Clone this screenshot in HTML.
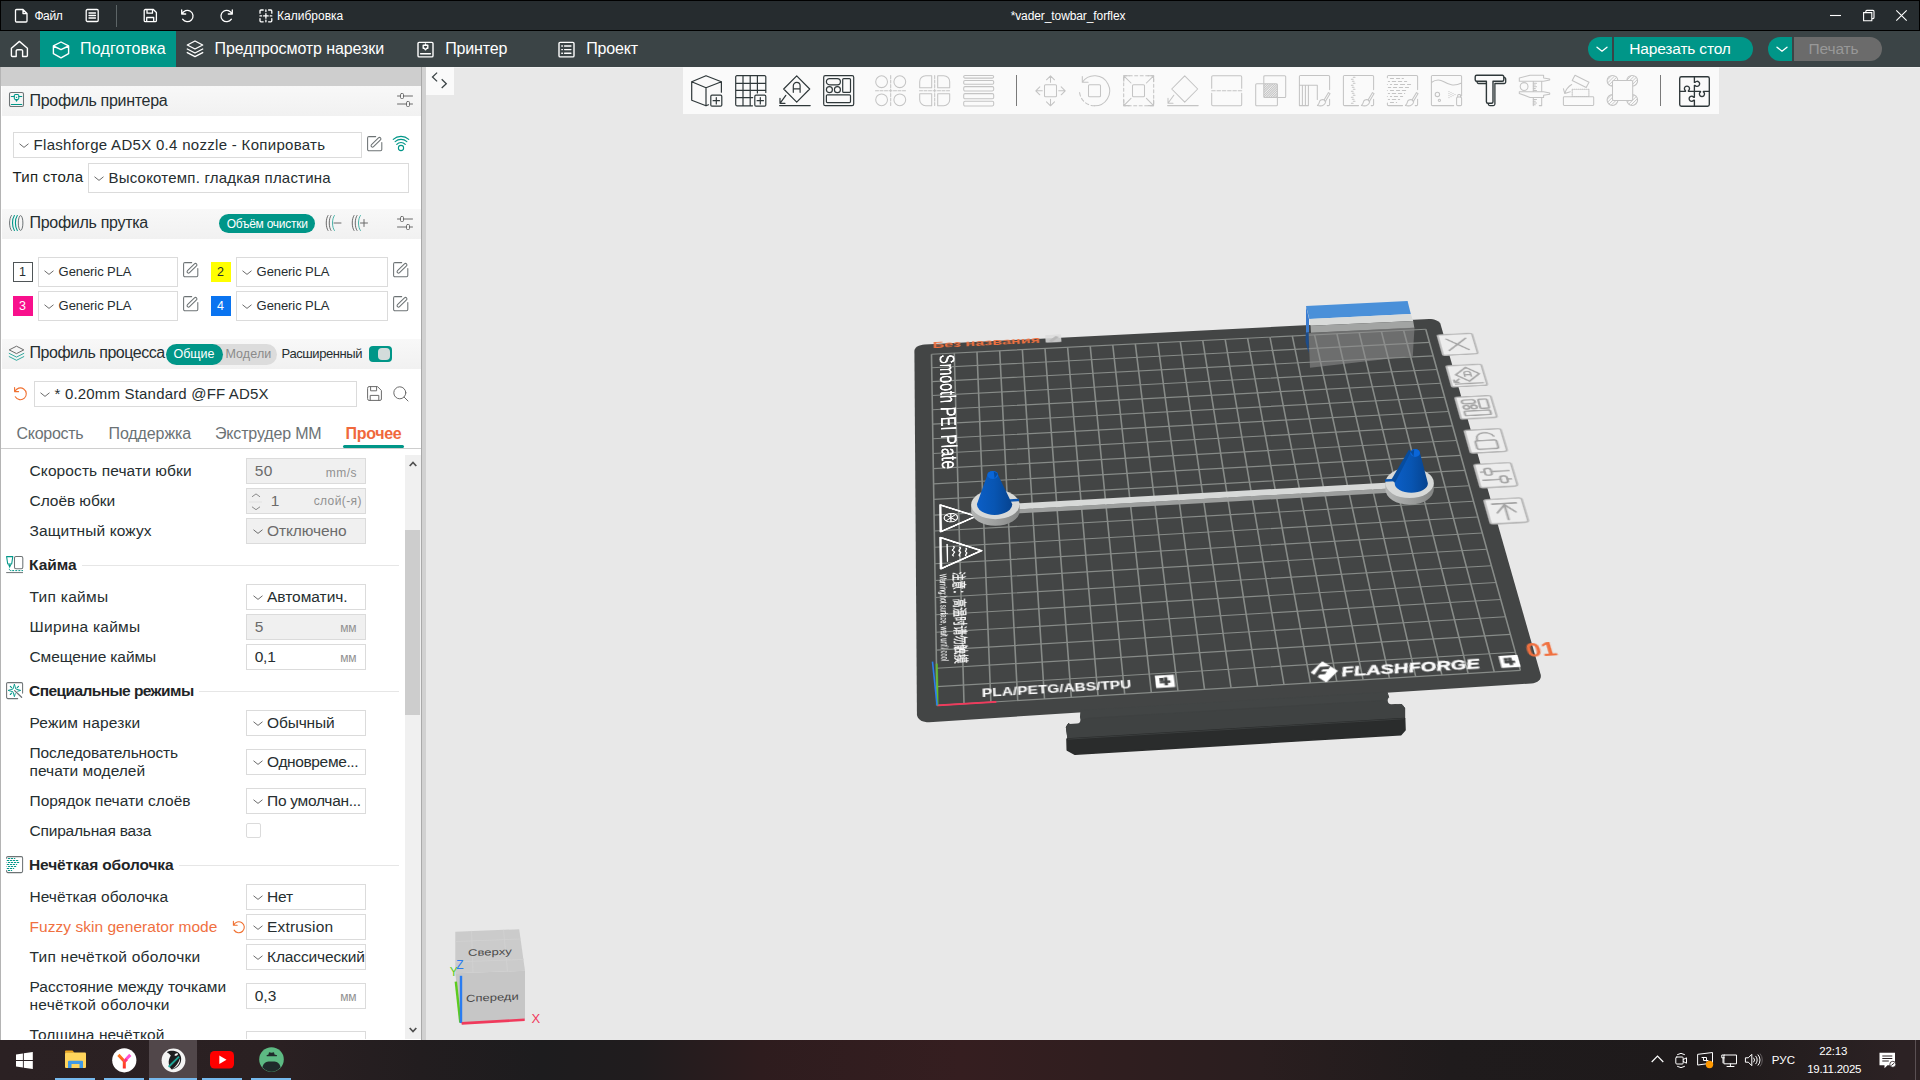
<!DOCTYPE html>
<html lang="ru"><head><meta charset="utf-8"><title>OrcaSlicer</title>
<style>
*{box-sizing:border-box;margin:0;padding:0}
html,body{width:1920px;height:1080px;overflow:hidden;background:#e8e8e8}
body{position:relative;font-family:"Liberation Sans",sans-serif;color:#262e30}
.t{position:absolute;white-space:nowrap;line-height:1;display:block}
.abs{position:absolute}
svg{overflow:visible}

</style></head>
<body>
<!-- top -->
<div class="" style="position:absolute;left:0px;top:0px;width:1920px;height:31px;background:#000"></div>
<div class="" style="position:absolute;left:1px;top:1px;width:1918px;height:29px;background:#262c2f"></div>
<svg style="position:absolute;left:14px;top:8px;" width="15" height="15" viewBox="0 0 15 15" fill="none"><path d="M1.5 2.5a1 1 0 0 1 1-1h6.5l4 4v7.5a1 1 0 0 1-1 1h-9.5a1 1 0 0 1-1-1z M9 1.5v4h4" stroke="#fff" stroke-width="1.3" stroke-linecap="round" stroke-linejoin="round"/></svg>
<span id="t1" class="t" style="left:34.39px;top:10px;font-size:12px;color:#fff;letter-spacing:-0.392px;">Файл</span>
<svg style="position:absolute;left:85px;top:8px;" width="15" height="15" viewBox="0 0 15 15" fill="none"><rect x="1.2" y="1.5" width="12" height="12" rx="1.2" stroke="#fff" stroke-width="1.3" stroke-linecap="round" stroke-linejoin="round"/><path d="M4 5h6.5M4 7.5h6.5M4 10h6.5" stroke="#fff" stroke-width="1.3" stroke-linecap="round" stroke-linejoin="round"/></svg>
<div class="" style="position:absolute;left:116px;top:4.5px;width:1px;height:22px;background:#5d6567"></div>
<svg style="position:absolute;left:143px;top:8px;" width="15" height="15" viewBox="0 0 15 15" fill="none"><path d="M1.2 2.7a1.2 1.2 0 0 1 1.2-1.2h8l3 3v8a1.2 1.2 0 0 1-1.2 1.2h-9.8a1.2 1.2 0 0 1-1.2-1.2z M4 1.5v3.7h5.5v-3.7 M3.7 13.7v-4.2h7v4.2" stroke="#fff" stroke-width="1.3" stroke-linecap="round" stroke-linejoin="round"/></svg>
<svg style="position:absolute;left:179.5px;top:7.7px;" width="15" height="15" viewBox="0 0 15 15" fill="none"><path d="M1.7 2v4h4 M2 6a5.7 5.7 0 1 1 0.6 5.2" stroke="#fff" stroke-width="1.3" stroke-linecap="round" stroke-linejoin="round"/></svg>
<svg style="position:absolute;left:218.5px;top:7.7px;" width="15" height="15" viewBox="0 0 15 15" fill="none"><path d="M13.3 2v4h-4 M13 6a5.7 5.7 0 1 0-0.6 5.2" stroke="#fff" stroke-width="1.3" stroke-linecap="round" stroke-linejoin="round"/></svg>
<svg style="position:absolute;left:258.5px;top:8.5px;" width="14" height="14" viewBox="0 0 14 14" fill="none"><path d="M1 4.2v-2.2a1 1 0 0 1 1-1h2.2 M9.6 1h2.2a1 1 0 0 1 1 1v2.2 M12.8 9.6v2.2a1 1 0 0 1-1 1h-2.2 M4.2 12.8h-2.2a1 1 0 0 1-1-1v-2.2 M6.9 4.6v4.6 M4.6 6.9h4.6 M6.9 1v1.6 M6.9 11.2v1.6 M1 6.9h1.6 M11.2 6.9h1.6" stroke="#fff" stroke-width="1.3" stroke-linecap="round" stroke-linejoin="round"/></svg>
<span id="t2" class="t" style="left:276.94px;top:10px;font-size:12px;color:#fff;letter-spacing:0.02px;">Калибровка</span>
<span id="t3" class="t" style="left:1010.64px;top:10px;font-size:12px;color:#fff;letter-spacing:-0.095px;">*vader_towbar_forflex</span>
<svg style="position:absolute;left:1830px;top:9px;" width="80" height="14" viewBox="0 0 80 14" fill="none"><path d="M0 6.5h11" stroke="#fff" stroke-width="1.1"/><path d="M33.6 3.6h8.2v8.2h-8.2z M35.8 3.4v-1a1 1 0 0 1 1-1h6.2a1 1 0 0 1 1 1v6.2a1 1 0 0 1-1 1h-1" stroke="#fff" stroke-width="1.1"/><path d="M66.3 1.3l10.4 10.4 M76.7 1.3l-10.4 10.4" stroke="#fff" stroke-width="1.1"/></svg>
<div class="" style="position:absolute;left:0px;top:31px;width:1920px;height:36px;background:#3b4446"></div>
<div class="" style="position:absolute;left:40px;top:31px;width:136px;height:36px;background:#009688"></div>
<svg style="position:absolute;left:10px;top:40px;" width="19" height="18" viewBox="0 0 19 18" fill="none"><path d="M1.4 8.2l8-6.8 8 6.8v7.3a1 1 0 0 1-1 1h-3.8v-5.4a1.4 1.4 0 0 0-1.4-1.4h-3.6a1.4 1.4 0 0 0-1.4 1.4v5.4h-3.8a1 1 0 0 1-1-1z" stroke="#fff" stroke-width="1.4" stroke-linecap="round" stroke-linejoin="round"/></svg>
<svg style="position:absolute;left:51.5px;top:40.5px;" width="18" height="18" viewBox="0 0 18 18" fill="none"><path d="M9 1l7.6 3.9v7.8l-7.6 4.2-7.6-4.2v-7.8z M1.5 5l7.5 3.6 7.5-3.6" stroke="#fff" stroke-width="1.4" stroke-linecap="round" stroke-linejoin="round"/></svg>
<span id="t4" class="t" style="left:80.12px;top:41px;font-size:16px;color:#fff;letter-spacing:0.145px;">Подготовка</span>
<svg style="position:absolute;left:185.8px;top:40.3px;" width="18" height="18" viewBox="0 0 18 18" fill="none"><path d="M9 1l7.7 4-7.7 4-7.7-4z M1.3 9l7.7 4 7.7-4 M1.3 12.6l7.7 4 7.7-4" stroke="#fff" stroke-width="1.4" stroke-linecap="round" stroke-linejoin="round"/></svg>
<span id="t5" class="t" style="left:214.52px;top:41px;font-size:16px;color:#fff;letter-spacing:-0.095px;">Предпросмотр нарезки</span>
<svg style="position:absolute;left:416.5px;top:40.5px;" width="17" height="17" viewBox="0 0 17 17" fill="none"><rect x="1" y="1.4" width="15" height="14.5" rx="1.2" stroke="#fff" stroke-width="1.4" stroke-linecap="round" stroke-linejoin="round"/><path d="M3.6 12.7h9.8 M6.2 4.3h4.6v3h-1.2l-1.1 1.5-1.1-1.5h-1.2z M8.5 4.3v-1.4" stroke="#fff" stroke-width="1.4" stroke-linecap="round" stroke-linejoin="round"/></svg>
<span id="t6" class="t" style="left:445.22px;top:41px;font-size:16px;color:#fff;letter-spacing:-0.168px;">Принтер</span>
<svg style="position:absolute;left:558px;top:40.5px;" width="17" height="17" viewBox="0 0 17 17" fill="none"><rect x="1" y="1.4" width="15" height="14.5" rx="1.2" stroke="#fff" stroke-width="1.4" stroke-linecap="round" stroke-linejoin="round"/><path d="M6.6 5h6.3 M6.6 8.6h6.3 M6.6 12.2h6.3 M3.8 5h.6 M3.8 8.6h.6 M3.8 12.2h.6" stroke="#fff" stroke-width="1.4" stroke-linecap="round" stroke-linejoin="round"/></svg>
<span id="t7" class="t" style="left:586.22px;top:41px;font-size:16px;color:#fff;letter-spacing:-0.157px;">Проект</span>
<div class="" style="position:absolute;left:1588px;top:37px;width:24px;height:24px;background:#009688;border-radius:12px 0 0 12px"></div>
<div class="" style="position:absolute;left:1614px;top:37px;width:139px;height:24px;background:#009688;border-radius:0 12px 12px 0"></div>
<svg style="position:absolute;left:1596px;top:46px;" width="12" height="7" viewBox="0 0 12 7" fill="none"><path d="M1 1.2l5 4 5-4" stroke="#fff" stroke-width="1.3" stroke-linecap="round" stroke-linejoin="round"/></svg>
<span id="t8" class="t" style="left:1629.29px;top:41px;font-size:15.5px;color:#fff;letter-spacing:-0.167px;">Нарезать стол</span>
<div class="" style="position:absolute;left:1768px;top:37px;width:24px;height:24px;background:#009688;border-radius:12px 0 0 12px"></div>
<div class="" style="position:absolute;left:1794px;top:37px;width:88px;height:24px;background:#6b6b6b;border-radius:0 12px 12px 0"></div>
<svg style="position:absolute;left:1776px;top:46px;" width="12" height="7" viewBox="0 0 12 7" fill="none"><path d="M1 1.2l5 4 5-4" stroke="#fff" stroke-width="1.3" stroke-linecap="round" stroke-linejoin="round"/></svg>
<span id="t9" class="t" style="left:1808.54px;top:41px;font-size:15.5px;color:#989898;letter-spacing:-0.139px;">Печать</span>
<!-- sidebar -->
<div class="" style="position:absolute;left:0px;top:67px;width:421px;height:973px;background:#fff"></div>
<div class="" style="position:absolute;left:0px;top:67px;width:1px;height:973px;background:#b4b4b4"></div>
<div class="" style="position:absolute;left:1px;top:67px;width:420px;height:19px;background:#cecece"></div>
<div class="" style="position:absolute;left:421px;top:67px;width:1px;height:973px;background:#a9a9a9"></div>
<div class="" style="position:absolute;left:422px;top:67px;width:4px;height:973px;background:#d1d1d1"></div>
<div class="" style="position:absolute;left:2px;top:86px;width:419px;height:30px;background:linear-gradient(#f8f8f8,#f1f1f1)"></div><span id="t10" class="t" style="left:29.52px;top:93px;font-size:16px;color:#262e30;letter-spacing:-0.306px;">Профиль принтера</span>
<svg style="position:absolute;left:9px;top:92px;" width="16" height="16" viewBox="0 0 16 16" fill="none"><rect x=".5" y=".5" width="14" height="14" rx="1.600" stroke="#6d7375" stroke-width="1.050"/><path d="M2.300 4.400h3 M9.800 4.400h3 M2.300 12.400h10.500" stroke="#009688" stroke-width="1.050" stroke-linecap="round"/><rect x="5.300" y="2.400" width="4.500" height="5" rx="1.200" stroke="#009688" stroke-width="1.050"/><circle cx="7.550" cy="5.300" r=".65" fill="#009688"/><path d="M5.900 7.600h3.300l-1.650 2.500z" fill="#009688"/></svg>
<svg style="position:absolute;left:397px;top:92px;" width="16" height="16" viewBox="0 0 16 16" fill="none"><path d="M0.5 4h3 M6.5 4h9 M0.5 12h9 M12.5 12h3" stroke="#6b6b6b" stroke-width="1" stroke-linecap="round" stroke-linejoin="round"/><rect x="3.5" y="1.5" width="3" height="5" rx="1" stroke="#6b6b6b" stroke-width="1" stroke-linecap="round" stroke-linejoin="round"/><rect x="9.5" y="9.5" width="3" height="5" rx="1" stroke="#6b6b6b" stroke-width="1" stroke-linecap="round" stroke-linejoin="round"/></svg>
<div class="" style="position:absolute;left:13px;top:132px;width:349px;height:26px;background:#fff;border:1px solid #dbdbdb"></div><svg style="position:absolute;left:19px;top:142.5px;" width="10" height="6" viewBox="0 0 10 6" fill="none"><path d="M0.8 1l4.2 3.4 4.2-3.4" stroke="#6b6b6b" stroke-width="1" stroke-linecap="round" stroke-linejoin="round"/></svg><span id="t11" class="t" style="left:33.55px;top:137px;font-size:15px;color:#262e30;letter-spacing:0.303px;">Flashforge AD5X 0.4 nozzle - Копировать</span>
<svg style="position:absolute;left:367px;top:136px;" width="16" height="16" viewBox="0 0 16 16" fill="none"><path d="M8.700 .6H1.900a1.300 1.300 0 0 0-1.300 1.300v11.500a1.300 1.300 0 0 0 1.300 1.300h11.600a1.300 1.300 0 0 0 1.300-1.300V6.400" stroke="#6d7375" stroke-width="1.050" stroke-linecap="round" stroke-linejoin="round"/><rect x="-1.450" y="-6.300" width="2.900" height="12.600" rx="1.450" transform="translate(9 6.300) rotate(45.500)" stroke="#6d7375" stroke-width="1.050" stroke-linecap="round" stroke-linejoin="round"/></svg>
<svg style="position:absolute;left:392px;top:135px;" width="18" height="17" viewBox="0 0 18 17" fill="none"><path d="M1.24 4.38A11.6 11.6 0 0 1 16.76 4.38 M3.13 6.71A8.6 8.6 0 0 1 14.87 6.71 M4.79 9.46A5.5 5.5 0 0 1 13.21 9.46" stroke="#009688" stroke-width="1.100" stroke-linecap="round"/><circle cx="9" cy="13" r="2.600" stroke="#009688" stroke-width="1.100"/></svg>
<span id="t12" class="t" style="left:12.55px;top:169px;font-size:15px;color:#1a1f21;letter-spacing:0.258px;">Тип стола</span>
<div class="" style="position:absolute;left:88px;top:163px;width:321px;height:30px;background:#fff;border:1px solid #dbdbdb"></div><svg style="position:absolute;left:94px;top:175.5px;" width="10" height="6" viewBox="0 0 10 6" fill="none"><path d="M0.8 1l4.2 3.4 4.2-3.4" stroke="#6b6b6b" stroke-width="1" stroke-linecap="round" stroke-linejoin="round"/></svg><span id="t13" class="t" style="left:108.55px;top:170px;font-size:15px;color:#262e30;letter-spacing:0.207px;">Высокотемп. гладкая пластина</span>
<div class="" style="position:absolute;left:2px;top:209px;width:419px;height:30px;background:linear-gradient(#f8f8f8,#f1f1f1)"></div><span id="t14" class="t" style="left:29.52px;top:215px;font-size:16px;color:#262e30;letter-spacing:-0.297px;">Профиль прутка</span>
<svg style="position:absolute;left:8px;top:214px;" width="16" height="18" viewBox="0 0 16 18" fill="none"><path d="M3.400 1.500c-2.500 3.500-2.500 11.500 0 15" stroke="#6d7375" stroke-width="1" stroke-linecap="round"/><path d="M6.400 1.500c-2.500 3.500-2.500 11.500 0 15 M9.300 1.500c-2.500 3.500-2.500 11.500 0 15" stroke="#009688" stroke-width="1.100" stroke-linecap="round"/><ellipse cx="12.600" cy="9" rx="2.300" ry="7.400" stroke="#6d7375" stroke-width="1"/></svg>
<div class="" style="position:absolute;left:219px;top:214px;width:96px;height:19px;background:#009688;border-radius:9.5px"></div>
<span id="t15" class="t" style="left:226.64px;top:218px;font-size:12px;color:#fff;letter-spacing:-0.254px;">Объём очистки</span>
<svg style="position:absolute;left:325px;top:214px;" width="17" height="18" viewBox="0 0 17 18" fill="none"><path d="M3 1.5c-2.4 3.5-2.4 11.5 0 15 M6 1.5c-2.4 3.5-2.4 11.5 0 15" stroke="#6b6b6b" stroke-width="1" stroke-linecap="round"/><path d="M9.4 1.5c-2.6 3.5-2.6 11.5 0 15" stroke="#009688" stroke-width="1" stroke-linecap="round" opacity=".7"/><path d="M9 9h7" stroke="#6b6b6b" stroke-width="1" stroke-linecap="round"/></svg>
<svg style="position:absolute;left:351px;top:214px;" width="17" height="18" viewBox="0 0 17 18" fill="none"><path d="M3 1.5c-2.4 3.5-2.4 11.5 0 15 M6 1.5c-2.4 3.5-2.4 11.5 0 15" stroke="#6b6b6b" stroke-width="1" stroke-linecap="round"/><path d="M9.4 1.5c-2.6 3.5-2.6 11.5 0 15" stroke="#009688" stroke-width="1" stroke-linecap="round" opacity=".7"/><path d="M9.5 9h7 M13 5.5v7" stroke="#6b6b6b" stroke-width="1" stroke-linecap="round"/></svg>
<svg style="position:absolute;left:397px;top:215px;" width="16" height="16" viewBox="0 0 16 16" fill="none"><path d="M0.5 4h3 M6.5 4h9 M0.5 12h9 M12.5 12h3" stroke="#6b6b6b" stroke-width="1" stroke-linecap="round" stroke-linejoin="round"/><rect x="3.5" y="1.5" width="3" height="5" rx="1" stroke="#6b6b6b" stroke-width="1" stroke-linecap="round" stroke-linejoin="round"/><rect x="9.5" y="9.5" width="3" height="5" rx="1" stroke="#6b6b6b" stroke-width="1" stroke-linecap="round" stroke-linejoin="round"/></svg>
<div class="" style="position:absolute;left:13px;top:262px;width:20px;height:20px;background:#fff;border:1px solid #4f5557"></div><span id="t16" class="t" style="left:19.12px;top:266px;font-size:12.5px;color:#262e30;">1</span><div class="" style="position:absolute;left:38px;top:257px;width:140px;height:30px;background:#fff;border:1px solid #dbdbdb"></div><svg style="position:absolute;left:44px;top:269.5px;" width="10" height="6" viewBox="0 0 10 6" fill="none"><path d="M0.8 1l4.2 3.4 4.2-3.4" stroke="#6b6b6b" stroke-width="1" stroke-linecap="round" stroke-linejoin="round"/></svg><span id="t17" class="t" style="left:58.61px;top:265px;font-size:13px;color:#262e30;letter-spacing:-0.079px;">Generic PLA</span><svg style="position:absolute;left:183px;top:262.3px;" width="16" height="16" viewBox="0 0 16 16" fill="none"><path d="M8.700 .6H1.900a1.300 1.300 0 0 0-1.300 1.300v11.500a1.300 1.300 0 0 0 1.300 1.300h11.600a1.300 1.300 0 0 0 1.300-1.300V6.400" stroke="#6d7375" stroke-width="1.050" stroke-linecap="round" stroke-linejoin="round"/><rect x="-1.450" y="-6.300" width="2.900" height="12.600" rx="1.450" transform="translate(9 6.300) rotate(45.500)" stroke="#6d7375" stroke-width="1.050" stroke-linecap="round" stroke-linejoin="round"/></svg>
<div class="" style="position:absolute;left:211px;top:262px;width:20px;height:20px;background:#ffff00;border:1px solid #ffff00"></div><span id="t18" class="t" style="left:217.12px;top:266px;font-size:12.5px;color:#262e30;">2</span><div class="" style="position:absolute;left:236px;top:257px;width:152px;height:30px;background:#fff;border:1px solid #dbdbdb"></div><svg style="position:absolute;left:242px;top:269.5px;" width="10" height="6" viewBox="0 0 10 6" fill="none"><path d="M0.8 1l4.2 3.4 4.2-3.4" stroke="#6b6b6b" stroke-width="1" stroke-linecap="round" stroke-linejoin="round"/></svg><span id="t19" class="t" style="left:256.61px;top:265px;font-size:13px;color:#262e30;letter-spacing:-0.079px;">Generic PLA</span><svg style="position:absolute;left:393px;top:262.3px;" width="16" height="16" viewBox="0 0 16 16" fill="none"><path d="M8.700 .6H1.900a1.300 1.300 0 0 0-1.300 1.300v11.500a1.300 1.300 0 0 0 1.300 1.300h11.600a1.300 1.300 0 0 0 1.300-1.300V6.400" stroke="#6d7375" stroke-width="1.050" stroke-linecap="round" stroke-linejoin="round"/><rect x="-1.450" y="-6.300" width="2.900" height="12.600" rx="1.450" transform="translate(9 6.300) rotate(45.500)" stroke="#6d7375" stroke-width="1.050" stroke-linecap="round" stroke-linejoin="round"/></svg>
<div class="" style="position:absolute;left:13px;top:296px;width:20px;height:20px;background:#f8108c;border:1px solid #f8108c"></div><span id="t20" class="t" style="left:19.12px;top:300px;font-size:12.5px;color:#fff;">3</span><div class="" style="position:absolute;left:38px;top:291px;width:140px;height:30px;background:#fff;border:1px solid #dbdbdb"></div><svg style="position:absolute;left:44px;top:303.5px;" width="10" height="6" viewBox="0 0 10 6" fill="none"><path d="M0.8 1l4.2 3.4 4.2-3.4" stroke="#6b6b6b" stroke-width="1" stroke-linecap="round" stroke-linejoin="round"/></svg><span id="t21" class="t" style="left:58.61px;top:299px;font-size:13px;color:#262e30;letter-spacing:-0.079px;">Generic PLA</span><svg style="position:absolute;left:183px;top:296.3px;" width="16" height="16" viewBox="0 0 16 16" fill="none"><path d="M8.700 .6H1.900a1.300 1.300 0 0 0-1.300 1.300v11.500a1.300 1.300 0 0 0 1.300 1.300h11.600a1.300 1.300 0 0 0 1.300-1.300V6.400" stroke="#6d7375" stroke-width="1.050" stroke-linecap="round" stroke-linejoin="round"/><rect x="-1.450" y="-6.300" width="2.900" height="12.600" rx="1.450" transform="translate(9 6.300) rotate(45.500)" stroke="#6d7375" stroke-width="1.050" stroke-linecap="round" stroke-linejoin="round"/></svg>
<div class="" style="position:absolute;left:211px;top:296px;width:20px;height:20px;background:#0a74f0;border:1px solid #0a74f0"></div><span id="t22" class="t" style="left:217.12px;top:300px;font-size:12.5px;color:#fff;">4</span><div class="" style="position:absolute;left:236px;top:291px;width:152px;height:30px;background:#fff;border:1px solid #dbdbdb"></div><svg style="position:absolute;left:242px;top:303.5px;" width="10" height="6" viewBox="0 0 10 6" fill="none"><path d="M0.8 1l4.2 3.4 4.2-3.4" stroke="#6b6b6b" stroke-width="1" stroke-linecap="round" stroke-linejoin="round"/></svg><span id="t23" class="t" style="left:256.61px;top:299px;font-size:13px;color:#262e30;letter-spacing:-0.079px;">Generic PLA</span><svg style="position:absolute;left:393px;top:296.3px;" width="16" height="16" viewBox="0 0 16 16" fill="none"><path d="M8.700 .6H1.900a1.300 1.300 0 0 0-1.300 1.300v11.500a1.300 1.300 0 0 0 1.300 1.300h11.600a1.300 1.300 0 0 0 1.300-1.300V6.400" stroke="#6d7375" stroke-width="1.050" stroke-linecap="round" stroke-linejoin="round"/><rect x="-1.450" y="-6.300" width="2.900" height="12.600" rx="1.450" transform="translate(9 6.300) rotate(45.500)" stroke="#6d7375" stroke-width="1.050" stroke-linecap="round" stroke-linejoin="round"/></svg>
<div class="" style="position:absolute;left:2px;top:339px;width:419px;height:30px;background:linear-gradient(#f8f8f8,#f1f1f1)"></div><span id="t24" class="t" style="left:29.52px;top:345px;font-size:16px;color:#262e30;letter-spacing:-0.476px;">Профиль процесса</span>
<svg style="position:absolute;left:8px;top:345px;" width="17" height="17" viewBox="0 0 17 17" fill="none"><path d="M8.5 1.2l7.3 3.7-7.3 3.7-7.3-3.7z" stroke="#6b6b6b" stroke-width="1" stroke-linejoin="round"/><path d="M1.2 8.4l7.3 3.7 7.3-3.7 M1.2 11.6l7.3 3.7 7.3-3.7" stroke="#009688" stroke-width="1" stroke-linejoin="round" stroke-linecap="round" opacity=".8"/></svg>
<div class="" style="position:absolute;left:166px;top:344px;width:111px;height:21px;background:#dcdcdc;border-radius:10.5px"></div>
<div class="" style="position:absolute;left:166px;top:344px;width:57px;height:21px;background:#009688;border-radius:10.5px"></div>
<span id="t25" class="t" style="left:173.62px;top:348px;font-size:12.5px;color:#fff;letter-spacing:-0.059px;">Общие</span>
<span id="t26" class="t" style="left:225.43px;top:348px;font-size:12.5px;color:#8a8a8a;letter-spacing:0.106px;">Модели</span>
<span id="t27" class="t" style="left:281.61px;top:347px;font-size:13px;color:#262e30;letter-spacing:-0.418px;">Расширенный</span>
<div class="" style="position:absolute;left:369px;top:346px;width:23px;height:16px;background:#009688;border-radius:4px"></div>
<div class="" style="position:absolute;left:378px;top:348px;width:12px;height:12px;background:#d3dcdb;border-radius:4px"></div>
<svg style="position:absolute;left:13px;top:386px;" width="15" height="15" viewBox="0 0 15 15" fill="none"><path d="M1.6 1.6v4h4 M1.9 5.6a5.9 5.9 0 1 1 0.4 5.2" stroke="#f07030" stroke-width="1.1" stroke-linecap="round" stroke-linejoin="round"/></svg>
<div class="" style="position:absolute;left:34px;top:381px;width:323px;height:26px;background:#fff;border:1px solid #dbdbdb"></div><svg style="position:absolute;left:40px;top:391.5px;" width="10" height="6" viewBox="0 0 10 6" fill="none"><path d="M0.8 1l4.2 3.4 4.2-3.4" stroke="#6b6b6b" stroke-width="1" stroke-linecap="round" stroke-linejoin="round"/></svg><span id="t28" class="t" style="left:54.55px;top:386px;font-size:15px;color:#262e30;letter-spacing:0.183px;">* 0.20mm Standard @FF AD5X</span>
<svg style="position:absolute;left:367px;top:386px;" width="15" height="15" viewBox="0 0 15 15" fill="none"><path d="M0.6 2a1.4 1.4 0 0 1 1.4-1.4h8.5l3.9 3.9v8.5a1.4 1.4 0 0 1-1.4 1.4h-11a1.4 1.4 0 0 1-1.4-1.4z M3.6 0.6v4.2h6v-4.2 M3.2 14.4v-5h8.6v5" stroke="#6b6b6b" stroke-width="1" stroke-linecap="round" stroke-linejoin="round"/></svg>
<svg style="position:absolute;left:393px;top:386px;" width="16" height="16" viewBox="0 0 16 16" fill="none"><circle cx="6.8" cy="6.8" r="6" stroke="#6b6b6b" stroke-width="1" stroke-linecap="round" stroke-linejoin="round"/><path d="M11.2 11.2l3.8 3.8" stroke="#6b6b6b" stroke-width="1" stroke-linecap="round" stroke-linejoin="round"/></svg>
<span id="t29" class="t" style="left:16.52px;top:426px;font-size:16px;color:#6b7275;letter-spacing:-0.282px;">Скорость</span>
<span id="t30" class="t" style="left:108.52px;top:426px;font-size:16px;color:#6b7275;letter-spacing:-0.106px;">Поддержка</span>
<span id="t31" class="t" style="left:215.02px;top:426px;font-size:16px;color:#6b7275;letter-spacing:-0.165px;">Экструдер ММ</span>
<span id="t32" class="t" style="left:345.52px;top:426px;font-size:16px;color:#f0683c;font-weight:700;letter-spacing:-0.323px;">Прочее</span>
<div class="" style="position:absolute;left:1px;top:448px;width:420px;height:1px;background:#cecece"></div>
<div class="" style="position:absolute;left:343px;top:445px;width:61px;height:3px;background:#009688;border-radius:1.5px"></div>
<span id="t33" class="t" style="left:29.54px;top:463px;font-size:15.5px;color:#262e30;letter-spacing:0.104px;">Скорость печати юбки</span>
<div class="" style="position:absolute;left:246px;top:458px;width:120px;height:26px;background:#f0f0f0;border:1px solid #dbdbdb"></div><span id="t34" class="t" style="left:254.73px;top:463px;font-size:15.5px;color:#6b6b6b;letter-spacing:0.335px;">50</span><span id="t35" class="t" style="left:325.64px;top:467px;font-size:12px;color:#909090;letter-spacing:0.504px;">mm/s</span>
<span id="t36" class="t" style="left:29.54px;top:493px;font-size:15.5px;color:#262e30;letter-spacing:-0.062px;">Слоёв юбки</span>
<div class="" style="position:absolute;left:246px;top:488px;width:120px;height:26px;background:#f0f0f0;border:1px solid #dbdbdb"></div><span id="t37" class="t" style="left:270.84px;top:493px;font-size:15.5px;color:#6b6b6b;">1</span><span id="t38" class="t" style="left:313.64px;top:495px;font-size:12px;color:#909090;letter-spacing:0.406px;">слой(-я)</span>
<svg style="position:absolute;left:251px;top:492.5px;" width="10" height="18" viewBox="0 0 10 18" fill="none"><path d="M1.300 3.600l3.700-2.700 3.700 2.700 M1.300 14l3.700 2.700 3.700-2.700" stroke="#8a8a8a" stroke-width="1" stroke-linecap="round" stroke-linejoin="round"/><path d="M-2 9h13" stroke="#dedede" stroke-width=".8"/></svg>
<span id="t39" class="t" style="left:29.54px;top:523px;font-size:15.5px;color:#262e30;letter-spacing:0.114px;">Защитный кожух</span>
<div class="" style="position:absolute;left:246px;top:518px;width:120px;height:26px;background:#f0f0f0;border:1px solid #dbdbdb"></div><svg style="position:absolute;left:252.5px;top:528.5px;" width="10" height="6" viewBox="0 0 10 6" fill="none"><path d="M0.8 1l4.2 3.4 4.2-3.4" stroke="#6b6b6b" stroke-width="1" stroke-linecap="round" stroke-linejoin="round"/></svg><span id="t40" class="t" style="left:267.04px;top:523px;font-size:15.5px;color:#6b6b6b;letter-spacing:-0.093px;">Отключено</span>
<svg style="position:absolute;left:6px;top:556px;" width="18" height="18" viewBox="0 0 18 18" fill="none"><path d="M.6 .600h6.200l-1.100 7.300h-4z" stroke="#009688" stroke-width="1.050" stroke-linejoin="round"/><path d="M2 8.600h3.400l-1.700 3.600z" fill="#009688"/><rect x="8.500" y=".5" width="8.300" height="12.200" rx="1.500" stroke="#6d7375" stroke-width="1.050"/><path d="M3.300 13.200c.2 .9 .7 1.400 1.600 1.400" stroke="#009688" stroke-width="1" stroke-linecap="round"/><path d="M6.200 14.600H17" stroke="#009688" stroke-width="1" stroke-dasharray="1.900 1.200"/><path d="M.2 16.600h16.800" stroke="#6d7375" stroke-width="1"/></svg><span id="t41" class="t" style="left:29.04px;top:557px;font-size:15.5px;color:#1f2527;font-weight:700;letter-spacing:-0.026px;">Кайма</span><div class="" style="position:absolute;left:81.5px;top:565px;width:317.5px;height:1px;background:#e6e6e6"></div>
<span id="t42" class="t" style="left:29.54px;top:589px;font-size:15.5px;color:#262e30;letter-spacing:0.28px;">Тип каймы</span>
<div class="" style="position:absolute;left:246px;top:584px;width:120px;height:26px;background:#fff;border:1px solid #dbdbdb"></div><svg style="position:absolute;left:252.5px;top:594.5px;" width="10" height="6" viewBox="0 0 10 6" fill="none"><path d="M0.8 1l4.2 3.4 4.2-3.4" stroke="#6b6b6b" stroke-width="1" stroke-linecap="round" stroke-linejoin="round"/></svg><span id="t43" class="t" style="left:267.04px;top:589px;font-size:15.5px;color:#262e30;letter-spacing:-0.03px;">Автоматич.</span>
<span id="t44" class="t" style="left:29.54px;top:619px;font-size:15.5px;color:#262e30;letter-spacing:0.251px;">Ширина каймы</span>
<div class="" style="position:absolute;left:246px;top:614px;width:120px;height:26px;background:#f0f0f0;border:1px solid #dbdbdb"></div><span id="t45" class="t" style="left:254.73px;top:619px;font-size:15.5px;color:#6b6b6b;">5</span><span id="t46" class="t" style="left:340.14px;top:622px;font-size:12px;color:#909090;letter-spacing:-0.16px;">мм</span>
<span id="t47" class="t" style="left:29.54px;top:649px;font-size:15.5px;color:#262e30;letter-spacing:-0.11px;">Смещение каймы</span>
<div class="" style="position:absolute;left:246px;top:644px;width:120px;height:26px;background:#fff;border:1px solid #dbdbdb"></div><span id="t48" class="t" style="left:254.73px;top:649px;font-size:15.5px;color:#262e30;letter-spacing:-0.239px;">0,1</span><span id="t49" class="t" style="left:340.14px;top:652px;font-size:12px;color:#909090;letter-spacing:-0.16px;">мм</span>
<svg style="position:absolute;left:6px;top:682px;" width="18" height="18" viewBox="0 0 18 18" fill="none"><path d="M11.700 16.600H1.900a1.300 1.300 0 0 1-1.300-1.300V1.900A1.300 1.300 0 0 1 1.900 .600h13.400a1.300 1.300 0 0 1 1.300 1.300v9.200" stroke="#6d7375" stroke-width="1.050" stroke-linecap="round"/><path d="M8.400 2.100l1.400 4.900 4.900 1.400-4.900 1.400-1.400 4.900-1.400-4.900-4.900-1.400 4.900-1.400z" fill="none" stroke="#009688" stroke-width=".9" stroke-linejoin="round"/><path d="M4.300 4.300l1.300 1.300 M12.500 4.300l-1.300 1.300 M4.300 12.500l1.300-1.300" stroke="#009688" stroke-width="1.100" stroke-linecap="round"/><path d="M8.600 8.600l7 6.700" stroke="#fff" stroke-width="2.600"/><path d="M8.600 8.600l7 6.700" stroke="#6d7375" stroke-width="1.300" stroke-linecap="round"/></svg><span id="t50" class="t" style="left:29.04px;top:683px;font-size:15.5px;color:#1f2527;font-weight:700;letter-spacing:-0.575px;">Специальные режимы</span><div class="" style="position:absolute;left:199px;top:691px;width:200px;height:1px;background:#e6e6e6"></div>
<span id="t51" class="t" style="left:29.54px;top:715px;font-size:15.5px;color:#262e30;letter-spacing:0.154px;">Режим нарезки</span>
<div class="" style="position:absolute;left:246px;top:710px;width:120px;height:26px;background:#fff;border:1px solid #dbdbdb"></div><svg style="position:absolute;left:252.5px;top:720.5px;" width="10" height="6" viewBox="0 0 10 6" fill="none"><path d="M0.8 1l4.2 3.4 4.2-3.4" stroke="#6b6b6b" stroke-width="1" stroke-linecap="round" stroke-linejoin="round"/></svg><span id="t52" class="t" style="left:267.04px;top:715px;font-size:15.5px;color:#262e30;letter-spacing:-0.155px;">Обычный</span>
<span id="t53" class="t" style="left:29.54px;top:745px;font-size:15.5px;color:#262e30;letter-spacing:-0.148px;">Последовательность</span>
<span id="t54" class="t" style="left:29.54px;top:763px;font-size:15.5px;color:#262e30;letter-spacing:0.02px;">печати моделей</span>
<div class="" style="position:absolute;left:246px;top:749px;width:120px;height:26px;background:#fff;border:1px solid #dbdbdb"></div><svg style="position:absolute;left:252.5px;top:759.5px;" width="10" height="6" viewBox="0 0 10 6" fill="none"><path d="M0.8 1l4.2 3.4 4.2-3.4" stroke="#6b6b6b" stroke-width="1" stroke-linecap="round" stroke-linejoin="round"/></svg><span id="t55" class="t" style="left:267.04px;top:754px;font-size:15.5px;color:#262e30;letter-spacing:-0.367px;">Одновреме...</span>
<span id="t56" class="t" style="left:29.54px;top:793px;font-size:15.5px;color:#262e30;letter-spacing:0.019px;">Порядок печати слоёв</span>
<div class="" style="position:absolute;left:246px;top:788px;width:120px;height:26px;background:#fff;border:1px solid #dbdbdb"></div><svg style="position:absolute;left:252.5px;top:798.5px;" width="10" height="6" viewBox="0 0 10 6" fill="none"><path d="M0.8 1l4.2 3.4 4.2-3.4" stroke="#6b6b6b" stroke-width="1" stroke-linecap="round" stroke-linejoin="round"/></svg><span id="t57" class="t" style="left:267.04px;top:793px;font-size:15.5px;color:#262e30;letter-spacing:-0.282px;">По умолчан...</span>
<span id="t58" class="t" style="left:29.54px;top:823px;font-size:15.5px;color:#262e30;letter-spacing:-0.207px;">Спиральная ваза</span>
<div class="" style="position:absolute;left:246px;top:823px;width:15px;height:15px;background:#fff;border:1px solid #dbdbdb;border-radius:2px"></div>
<svg style="position:absolute;left:6px;top:856px;" width="18" height="18" viewBox="0 0 18 18" fill="none"><path d="M.6 2.200v-.3a1.300 1.300 0 0 1 1.300-1.300h13.400a1.300 1.300 0 0 1 1.300 1.300v13.400a1.300 1.300 0 0 1-1.300 1.300H1.900a1.300 1.300 0 0 1-1.300-1.300v-.8" stroke="#6d7375" stroke-width="1.050" stroke-linecap="round"/><path d="M2.32 2.44H3.65 M5.29 2.44H6.62 M8.41 2.44H8.81 M1.23 4.47H2.71 M4.35 4.47H5.68 M7.32 4.47H8.65 M10.29 4.47H11.78 M2.32 6.50H3.65 M5.29 6.50H6.62 M8.41 6.50H9.74 M11.38 6.50H12.71 M1.23 8.47H2.71 M4.35 8.47H5.68 M7.32 8.47H8.65 M10.44 8.47H10.68 M2.32 10.47H3.65 M5.29 10.47H6.62 M8.41 10.47H9.74 M1.23 12.50H2.71 M4.35 12.50H5.68 M7.32 12.50H7.71 M2.32 14.47H3.65 M5.29 14.47H5.68" stroke="#009688" stroke-width="1.100" stroke-linecap="round"/><circle cx=".5" cy="6.500" r=".45" fill="#6d7375"/><circle cx=".5" cy="10.500" r=".45" fill="#6d7375"/></svg><span id="t59" class="t" style="left:29.04px;top:857px;font-size:15.5px;color:#1f2527;font-weight:700;letter-spacing:-0.126px;">Нечёткая оболочка</span><div class="" style="position:absolute;left:178.5px;top:865px;width:220.5px;height:1px;background:#e6e6e6"></div>
<span id="t60" class="t" style="left:29.54px;top:889px;font-size:15.5px;color:#262e30;letter-spacing:-0.003px;">Нечёткая оболочка</span>
<div class="" style="position:absolute;left:246px;top:884px;width:120px;height:26px;background:#fff;border:1px solid #dbdbdb"></div><svg style="position:absolute;left:252.5px;top:894.5px;" width="10" height="6" viewBox="0 0 10 6" fill="none"><path d="M0.8 1l4.2 3.4 4.2-3.4" stroke="#6b6b6b" stroke-width="1" stroke-linecap="round" stroke-linejoin="round"/></svg><span id="t61" class="t" style="left:267.04px;top:889px;font-size:15.5px;color:#262e30;letter-spacing:-0.161px;">Нет</span>
<span id="t62" class="t" style="left:29.54px;top:919px;font-size:15.5px;color:#f0703f;letter-spacing:0.037px;">Fuzzy skin generator mode</span>
<svg style="position:absolute;left:232px;top:920px;" width="14" height="14" viewBox="0 0 14 14" fill="none"><path d="M1.4 1.4v3.8h3.8 M1.7 5.2a5.5 5.5 0 1 1 0.4 4.9" stroke="#f07030" stroke-width="1.1" stroke-linecap="round" stroke-linejoin="round"/></svg>
<div class="" style="position:absolute;left:246px;top:914px;width:120px;height:26px;background:#fff;border:1px solid #dbdbdb"></div><svg style="position:absolute;left:252.5px;top:924.5px;" width="10" height="6" viewBox="0 0 10 6" fill="none"><path d="M0.8 1l4.2 3.4 4.2-3.4" stroke="#6b6b6b" stroke-width="1" stroke-linecap="round" stroke-linejoin="round"/></svg><span id="t63" class="t" style="left:267.04px;top:919px;font-size:15.5px;color:#262e30;letter-spacing:0.182px;">Extrusion</span>
<span id="t64" class="t" style="left:29.54px;top:949px;font-size:15.5px;color:#262e30;letter-spacing:0.232px;">Тип нечёткой оболочки</span>
<div class="" style="position:absolute;left:246px;top:944px;width:120px;height:26px;background:#fff;border:1px solid #dbdbdb"></div><svg style="position:absolute;left:252.5px;top:954.5px;" width="10" height="6" viewBox="0 0 10 6" fill="none"><path d="M0.8 1l4.2 3.4 4.2-3.4" stroke="#6b6b6b" stroke-width="1" stroke-linecap="round" stroke-linejoin="round"/></svg><div class="" style="position:absolute;left:247px;top:945px;width:118px;height:24px;overflow:hidden"><span id="t65" class="t" style="left:20.04px;top:4px;font-size:15.5px;color:#262e30;letter-spacing:-0.143px;">Классический</span></div>
<span id="t66" class="t" style="left:29.54px;top:979px;font-size:15.5px;color:#262e30;letter-spacing:-0.015px;">Расстояние между точками</span>
<span id="t67" class="t" style="left:29.54px;top:997px;font-size:15.5px;color:#262e30;letter-spacing:0.252px;">нечёткой оболочки</span>
<div class="" style="position:absolute;left:246px;top:983px;width:120px;height:26px;background:#fff;border:1px solid #dbdbdb"></div><span id="t68" class="t" style="left:254.73px;top:988px;font-size:15.5px;color:#262e30;letter-spacing:0.011px;">0,3</span><span id="t69" class="t" style="left:340.14px;top:991px;font-size:12px;color:#909090;letter-spacing:-0.16px;">мм</span>
<div class="" style="position:absolute;left:1px;top:1028px;width:403px;height:11px;overflow:hidden"><span id="t70" class="t" style="left:28.54px;top:-1px;font-size:15.5px;color:#262e30;letter-spacing:0.11px;">Толщина нечёткой</span><div class="" style="position:absolute;left:245px;top:3px;width:120px;height:26px;background:#fff;border:1px solid #dbdbdb"></div><span id="t71" class="t" style="left:253.73px;top:8px;font-size:15.5px;color:#262e30;letter-spacing:0.011px;">0,2</span></div>
<div class="" style="position:absolute;left:405px;top:455px;width:16px;height:584px;background:#f0f0f0"></div>
<div class="" style="position:absolute;left:405px;top:530px;width:15px;height:185px;background:#cdcdcd"></div>
<svg style="position:absolute;left:409px;top:461px;" width="8" height="6" viewBox="0 0 8 6" fill="none"><path d="M0.7 5l3.3-3.6 3.3 3.6" stroke="#505050" stroke-width="1.7" stroke-linejoin="miter"/></svg>
<svg style="position:absolute;left:409px;top:1027px;" width="8" height="6" viewBox="0 0 8 6" fill="none"><path d="M0.7 1l3.3 3.6 3.3-3.6" stroke="#505050" stroke-width="1.7" stroke-linejoin="miter"/></svg>
<!-- canvas -->
<div class="" style="position:absolute;left:426px;top:67px;width:1494px;height:973px;background:#e8e8e8"></div>
<div class="" style="position:absolute;left:426px;top:67px;width:1494px;height:1px;background:#f0f0f0"></div>
<div class="" style="position:absolute;left:426px;top:67px;width:28px;height:28px;background:#fafafa"></div>
<svg style="position:absolute;left:431px;top:71px;" width="18" height="18" viewBox="0 0 18 18" fill="none"><path d="M6.100 1.600L1.500 6l4.600 4.400 M10.700 8.300l4.600 4.400-4.600 4.300" stroke="#3b4446" stroke-width="1.300" stroke-linecap="butt" stroke-linejoin="miter"/></svg>
<div class="" style="position:absolute;left:683px;top:67px;width:1036px;height:47px;background:#fafafa"></div>
<svg style="position:absolute;left:691px;top:75px;" width="32" height="32" viewBox="0 0 32 32" fill="none"><path d="M15 .7l15.4 6v10.5 M15 .7L.7 6.7v18.5l14.3 5.6V12.7L.7 6.7 M15 12.7l15.4-6 M15 30.8l2.5-1" stroke="#2f383a" stroke-width="1.2" stroke-linecap="round" stroke-linejoin="round"/><rect x="19.8" y="20.2" width="11" height="11" rx="1.2" stroke="#2f383a" stroke-width="1.2" stroke-linecap="round" stroke-linejoin="round"/><path d="M25.3 22.5v6.4M22.1 25.7h6.4" stroke="#2f383a" stroke-width="1.2" stroke-linecap="round" stroke-linejoin="round"/></svg><svg style="position:absolute;left:735px;top:75px;" width="32" height="32" viewBox="0 0 32 32" fill="none"><path d="M17.5 30.8H1.9a1.2 1.2 0 0 1-1.2-1.2V1.9A1.2 1.2 0 0 1 1.900 .7h27.700a1.2 1.2 0 0 1 1.200 1.2v15.600 M8 .7v30 M15.200 .7v30 M22.400 .7v17.300 M.7 8.300h30 M.7 15.400h30 M.7 22.600h17" stroke="#2f383a" stroke-width="1.2" stroke-linecap="round" stroke-linejoin="round"/><rect x="19.800" y="20.200" width="11" height="11" rx="1.200" stroke="#2f383a" stroke-width="1.2" stroke-linecap="round" stroke-linejoin="round"/><path d="M25.300 22.500v6.400M22.100 25.700h6.400" stroke="#2f383a" stroke-width="1.2" stroke-linecap="round" stroke-linejoin="round"/></svg><svg style="position:absolute;left:779px;top:75px;" width="32" height="32" viewBox="0 0 32 32" fill="none"><path d="M17.700 .8l13 13.200-13 13.200-13-13.200z M.6 30.600h30.600 M6.800 20.300L1 28.300 M1 23.300v5h5" stroke="#2f383a" stroke-width="1.2" stroke-linecap="round" stroke-linejoin="round"/><path d="M14.300 17.300v-6.500a3.400 3.400 0 0 1 6.800 0v6.500 M14.300 13.800h6.800" stroke="#2f383a" stroke-width="1.2" stroke-linecap="round" stroke-linejoin="round"/></svg><svg style="position:absolute;left:823px;top:75px;" width="32" height="32" viewBox="0 0 32 32" fill="none"><rect x=".7" y=".7" width="30" height="30" rx="1.600" stroke="#2f383a" stroke-width="1.2" stroke-linecap="round" stroke-linejoin="round"/><rect x="3.400" y="3.600" width="14" height="6.200" rx="3.100" stroke="#2f383a" stroke-width="1.2" stroke-linecap="round" stroke-linejoin="round"/><circle cx="6.400" cy="14.700" r="3" stroke="#2f383a" stroke-width="1.2" stroke-linecap="round" stroke-linejoin="round"/><circle cx="14.400" cy="14.700" r="3" stroke="#2f383a" stroke-width="1.2" stroke-linecap="round" stroke-linejoin="round"/><rect x="19.700" y="3.600" width="7.800" height="13.800" rx="1" stroke="#2f383a" stroke-width="1.2" stroke-linecap="round" stroke-linejoin="round"/><rect x="3.400" y="19.800" width="24.100" height="7.800" rx="1" stroke="#2f383a" stroke-width="1.2" stroke-linecap="round" stroke-linejoin="round"/></svg><svg style="position:absolute;left:875px;top:75px;" width="32" height="32" viewBox="0 0 32 32" fill="none"><circle cx="6.600" cy="6.700" r="5.900" stroke="#c4c4c4" stroke-width="1.05" stroke-linecap="round" stroke-linejoin="round"/><circle cx="24.800" cy="6.700" r="5.900" stroke="#c4c4c4" stroke-width="1.05" stroke-linecap="round" stroke-linejoin="round"/><circle cx="6.600" cy="24.800" r="5.900" stroke="#c4c4c4" stroke-width="1.05" stroke-linecap="round" stroke-linejoin="round"/><circle cx="24.800" cy="24.800" r="5.900" stroke="#c4c4c4" stroke-width="1.05" stroke-linecap="round" stroke-linejoin="round"/><path d="M15.700 .5v31 M.5 15.700h31" stroke="#c4c4c4" stroke-width="1.05" stroke-linecap="round" stroke-linejoin="round" stroke-dasharray="3 1.500"/></svg><svg style="position:absolute;left:919px;top:75px;" width="32" height="32" viewBox="0 0 32 32" fill="none"><path d="M12.700 .7v12H.7V6.700a6 6 0 0 1 6-6z M18.700 .7h6a6 6 0 0 1 6 6v6h-12z M.7 18.700h12v12h-6a6 6 0 0 1-6-6z M18.700 18.700h12v6a6 6 0 0 1-6 6h-6z" stroke="#c4c4c4" stroke-width="1.05" stroke-linecap="round" stroke-linejoin="round"/><path d="M15.700 .5v31 M.5 15.700h31" stroke="#c4c4c4" stroke-width="1.05" stroke-linecap="round" stroke-linejoin="round" stroke-dasharray="3 1.500"/></svg><svg style="position:absolute;left:963px;top:75px;" width="32" height="32" viewBox="0 0 32 32" fill="none"><rect x=".7" y="0.5" width="30" height="2.6" rx="1.300" stroke="#c4c4c4" stroke-width="1.05" stroke-linecap="round" stroke-linejoin="round"/><rect x=".7" y="5.4" width="30" height="3.8" rx="1.300" stroke="#c4c4c4" stroke-width="1.05" stroke-linecap="round" stroke-linejoin="round"/><rect x=".7" y="11.6" width="30" height="4.3" rx="1.300" stroke="#c4c4c4" stroke-width="1.05" stroke-linecap="round" stroke-linejoin="round"/><rect x=".7" y="18.6" width="30" height="5.1" rx="1.300" stroke="#c4c4c4" stroke-width="1.05" stroke-linecap="round" stroke-linejoin="round"/><rect x=".7" y="26.2" width="30" height="4.7" rx="1.300" stroke="#c4c4c4" stroke-width="1.05" stroke-linecap="round" stroke-linejoin="round"/></svg><svg style="position:absolute;left:1035px;top:75px;" width="32" height="32" viewBox="0 0 32 32" fill="none"><rect x="9.500" y="9.800" width="12" height="12" rx="1" stroke="#c4c4c4" stroke-width="1.05" stroke-linecap="round" stroke-linejoin="round"/><path d="M15.500 .8v6.500 M11.500 4.800l4-4 4 4 M15.500 30.800v-6.500 M11.500 26.800l4 4 4-4 M.8 15.800h6.500 M4.800 11.800l-4 4 4 4 M30.200 15.800h-6.500 M26.200 11.800l4 4-4 4" stroke="#c4c4c4" stroke-width="1.05" stroke-linecap="round" stroke-linejoin="round"/></svg><svg style="position:absolute;left:1079px;top:75px;" width="32" height="32" viewBox="0 0 32 32" fill="none"><rect x="9.500" y="9.800" width="12" height="12" rx="1" stroke="#c4c4c4" stroke-width="1.05" stroke-linecap="round" stroke-linejoin="round"/><path d="M3.300 7.300a15 15 0 1 1 12.200 23.500 M3.300 1.500v5.800h5.800" stroke="#c4c4c4" stroke-width="1.05" stroke-linecap="round" stroke-linejoin="round"/><path d="M15.500 30.800a15 15 0 0 1-15-15" stroke="#c4c4c4" stroke-width="1.05" stroke-linecap="round" stroke-linejoin="round" stroke-dasharray="3.500 2.500"/></svg><svg style="position:absolute;left:1123px;top:75px;" width="32" height="32" viewBox="0 0 32 32" fill="none"><rect x="9.500" y="9.800" width="12" height="12" rx="1" stroke="#c4c4c4" stroke-width="1.05" stroke-linecap="round" stroke-linejoin="round"/><rect x=".7" y=".7" width="30" height="30" stroke="#c4c4c4" stroke-width="1.05" stroke-linecap="round" stroke-linejoin="round" stroke-dasharray="3 2.500"/><path d="M.8 .8l7.200 7.200 M.8 6.300V.8h5.500 M30.600 .8l-7.200 7.200 M25.100 .8h5.500v5.500 M.8 30.600l7.200-7.200 M.8 25.100v5.500h5.500 M30.600 30.600l-7.200-7.200 M30.600 25.100v5.500h-5.500" stroke="#c4c4c4" stroke-width="1.05" stroke-linecap="round" stroke-linejoin="round"/></svg><svg style="position:absolute;left:1167px;top:75px;" width="32" height="32" viewBox="0 0 32 32" fill="none"><path d="M17.700 .8l13 13.200-13 13.200-13-13.200z M.6 30.600h30.600 M6.800 20.300L1 28.300 M1 23.300v5h5" stroke="#c4c4c4" stroke-width="1.05" stroke-linecap="round" stroke-linejoin="round"/></svg><svg style="position:absolute;left:1211px;top:75px;" width="32" height="32" viewBox="0 0 32 32" fill="none"><path d="M.7 13.300V1.900A1.200 1.200 0 0 1 1.900 .7h27.600a1.200 1.200 0 0 1 1.200 1.200v11.400 M.7 18.300v11.300a1.200 1.200 0 0 0 1.200 1.200h27.600a1.200 1.200 0 0 0 1.200-1.200V18.300" stroke="#c4c4c4" stroke-width="1.05" stroke-linecap="round" stroke-linejoin="round"/><path d="M.7 15.800h30" stroke="#c4c4c4" stroke-width="1.05" stroke-linecap="round" stroke-linejoin="round" stroke-dasharray="3.500 1.800"/></svg><svg style="position:absolute;left:1255px;top:75px;" width="32" height="32" viewBox="0 0 32 32" fill="none"><defs><clipPath id="cpb"><rect x="8.800" y="8.800" width="13.600" height="13.600"/></clipPath></defs><rect x=".7" y="8.800" width="21.700" height="22" rx="1" stroke="#c4c4c4" stroke-width="1.05" stroke-linecap="round" stroke-linejoin="round"/><rect x="8.800" y=".7" width="21.900" height="21.700" rx="1" stroke="#c4c4c4" stroke-width="1.05" stroke-linecap="round" stroke-linejoin="round"/><g clip-path="url(#cpb)"><path d="M-2.7 22.400L10.9 8.800" stroke="#c4c4c4" stroke-width="1.05" stroke-linecap="round" stroke-linejoin="round" stroke-width=".8"/><path d="M-0.4 22.400L13.2 8.800" stroke="#c4c4c4" stroke-width="1.05" stroke-linecap="round" stroke-linejoin="round" stroke-width=".8"/><path d="M1.9 22.400L15.5 8.800" stroke="#c4c4c4" stroke-width="1.05" stroke-linecap="round" stroke-linejoin="round" stroke-width=".8"/><path d="M4.2 22.400L17.8 8.800" stroke="#c4c4c4" stroke-width="1.05" stroke-linecap="round" stroke-linejoin="round" stroke-width=".8"/><path d="M6.5 22.400L20.1 8.800" stroke="#c4c4c4" stroke-width="1.05" stroke-linecap="round" stroke-linejoin="round" stroke-width=".8"/><path d="M8.8 22.400L22.4 8.800" stroke="#c4c4c4" stroke-width="1.05" stroke-linecap="round" stroke-linejoin="round" stroke-width=".8"/><path d="M11.1 22.400L24.7 8.800" stroke="#c4c4c4" stroke-width="1.05" stroke-linecap="round" stroke-linejoin="round" stroke-width=".8"/><path d="M13.4 22.400L27 8.800" stroke="#c4c4c4" stroke-width="1.05" stroke-linecap="round" stroke-linejoin="round" stroke-width=".8"/><path d="M15.7 22.400L29.3 8.800" stroke="#c4c4c4" stroke-width="1.05" stroke-linecap="round" stroke-linejoin="round" stroke-width=".8"/><path d="M18 22.400L31.6 8.800" stroke="#c4c4c4" stroke-width="1.05" stroke-linecap="round" stroke-linejoin="round" stroke-width=".8"/><path d="M20.3 22.400L33.9 8.800" stroke="#c4c4c4" stroke-width="1.05" stroke-linecap="round" stroke-linejoin="round" stroke-width=".8"/></g></svg><svg style="position:absolute;left:1299px;top:75px;" width="32" height="32" viewBox="0 0 32 32" fill="none"><path d="M9.400 30.600H.4V1.600A1.200 1.200 0 0 1 1.600 .4h27.800a1.200 1.200 0 0 1 1.200 1.200v13 M.4 10.300h17.900v14.200 M3.400 10.300v20.300 M6.400 10.300v20.300 M9.400 10.300v20.300" stroke="#c4c4c4" stroke-width="1.05" stroke-linecap="round" stroke-linejoin="round"/><path d="M30.600 24.300v5.100a1.200 1.200 0 0 1-1.200 1.200h-1.200" stroke="#c4c4c4" stroke-width="1.05" stroke-linecap="round" stroke-linejoin="round"/><path d="M29.500 17.600l1.600 1-4.600 7.600-1.600-1z" fill="#fafafa" stroke="#c4c4c4" stroke-width="1.05" stroke-linecap="round" stroke-linejoin="round"/><path d="M24.900 24.800c-2.300-.7-4.200 .6-4.600 2.500-.2 1.400-.8 2.400-1.900 3.200 3.600 .9 7.200-.2 8.300-3.700z" fill="#fafafa" stroke="#c4c4c4" stroke-width="1.05" stroke-linecap="round" stroke-linejoin="round"/></svg><svg style="position:absolute;left:1343px;top:75px;" width="32" height="32" viewBox="0 0 32 32" fill="none"><path d="M15.600 30.600H1.600a1.200 1.200 0 0 1-1.200-1.200V1.600A1.200 1.200 0 0 1 1.600 .4h27.800a1.200 1.200 0 0 1 1.200 1.200v13" stroke="#c4c4c4" stroke-width="1.05" stroke-linecap="round" stroke-linejoin="round"/><path d="M10.3 2.2h1.700 M8.4 4.21h1.700 M9.3 6.22h1.700 M10.3 8.23h1.700 M8.4 10.24h1.700 M9.3 12.25h1.700 M10.3 14.26h1.700 M8.4 16.27h1.700 M9.3 18.28h1.700 M10.3 20.29h1.700 M8.4 22.3h1.700 M9.3 24.31h1.700 M10.3 26.32h1.700 M8.4 28.33h1.700 " stroke="#c4c4c4" stroke-width="1.05" stroke-linecap="round" stroke-linejoin="round"/><path d="M30.600 24.300v5.100a1.200 1.200 0 0 1-1.200 1.200h-1.200" stroke="#c4c4c4" stroke-width="1.05" stroke-linecap="round" stroke-linejoin="round"/><path d="M29.500 17.600l1.600 1-4.600 7.600-1.600-1z" fill="#fafafa" stroke="#c4c4c4" stroke-width="1.05" stroke-linecap="round" stroke-linejoin="round"/><path d="M24.900 24.800c-2.300-.7-4.200 .6-4.600 2.500-.2 1.400-.8 2.400-1.900 3.200 3.600 .9 7.200-.2 8.300-3.700z" fill="#fafafa" stroke="#c4c4c4" stroke-width="1.05" stroke-linecap="round" stroke-linejoin="round"/></svg><svg style="position:absolute;left:1387px;top:75px;" width="32" height="32" viewBox="0 0 32 32" fill="none"><path d="M.4 2.800V1.600A1.200 1.200 0 0 1 1.600 .4h27.800a1.200 1.200 0 0 1 1.200 1.200v13 M.4 28v1.400a1.200 1.200 0 0 0 1.200 1.200h14" stroke="#c4c4c4" stroke-width="1.05" stroke-linecap="round" stroke-linejoin="round"/><path d="M3.39 3.44H6.54 M9.49 3.44H12.64 M15.11 3.44H16.39 M1.33 6.44H2.61 M5.27 6.44H8.70 M11.36 6.44H14.70 M17.46 6.44H19.67 M3.39 9.44H4.67 M7.33 9.44H10.57 M13.42 9.44H17.61 M20.46 9.44H23.61 M1.33 12.44H3.73 M6.39 12.44H9.64 M12.30 12.44H15.64 M18.39 12.44H21.54 M3.39 15.44H6.54 M9.49 15.44H12.64 M15.30 15.44H18.64 M1.33 18.44H2.61 M5.27 18.44H8.70 M11.36 18.44H14.70 M17.46 18.44H17.70 M3.39 21.44H4.67 M7.33 21.44H10.57 M13.42 21.44H15.64 M1.33 24.44H2.61 M5.27 24.44H8.70 M11.36 24.44H12.64 M3.39 27.44H6.54 M9.30 27.44H9.64 " stroke="#c4c4c4" stroke-width="1.05" stroke-linecap="round" stroke-linejoin="round"/><circle cx=".4" cy="9.44" r=".5" fill="#c4c4c4"/><circle cx=".4" cy="15.44" r=".5" fill="#c4c4c4"/><circle cx=".4" cy="21.44" r=".5" fill="#c4c4c4"/><path d="M30.600 24.300v5.100a1.200 1.200 0 0 1-1.200 1.200h-1.200" stroke="#c4c4c4" stroke-width="1.05" stroke-linecap="round" stroke-linejoin="round"/><path d="M29.500 17.600l1.600 1-4.600 7.600-1.600-1z" fill="#fafafa" stroke="#c4c4c4" stroke-width="1.05" stroke-linecap="round" stroke-linejoin="round"/><path d="M24.900 24.800c-2.300-.7-4.200 .6-4.600 2.500-.2 1.400-.8 2.400-1.900 3.200 3.600 .9 7.200-.2 8.300-3.700z" fill="#fafafa" stroke="#c4c4c4" stroke-width="1.05" stroke-linecap="round" stroke-linejoin="round"/></svg><svg style="position:absolute;left:1431px;top:75px;" width="32" height="32" viewBox="0 0 32 32" fill="none"><path d="M22.700 30.600H1.600a1.200 1.200 0 0 1-1.200-1.200V1.600A1.200 1.200 0 0 1 1.600 .4h27.800a1.200 1.200 0 0 1 1.200 1.200v19.400 M.4 7.500c4-2.900 8-3.300 12.500-.8s9.500 5.300 17.700 1.300" stroke="#c4c4c4" stroke-width="1.05" stroke-linecap="round" stroke-linejoin="round"/><circle cx="6.400" cy="19.400" r="2.200" stroke="#c4c4c4" stroke-width="1.05" stroke-linecap="round" stroke-linejoin="round"/><circle cx="8.400" cy="25.300" r="1.150" stroke="#c4c4c4" stroke-width="1.05" stroke-linecap="round" stroke-linejoin="round"/><rect x="25.600" y="22" width="5" height="8.600" rx="1.200" stroke="#c4c4c4" stroke-width="1.05" stroke-linecap="round" stroke-linejoin="round"/><path d="M26.700 22v-1.600a.9 .9 0 0 1 .9-.9h1a.9 .9 0 0 1 .9 .9V22" stroke="#c4c4c4" stroke-width="1.05" stroke-linecap="round" stroke-linejoin="round"/><circle cx="18" cy="16.6" r=".6" fill="#c4c4c4"/><circle cx="18" cy="18.6" r=".6" fill="#c4c4c4"/><circle cx="18" cy="20.6" r=".6" fill="#c4c4c4"/><circle cx="18" cy="22.6" r=".6" fill="#c4c4c4"/><circle cx="20" cy="17.6" r=".6" fill="#c4c4c4"/><circle cx="20" cy="19.6" r=".6" fill="#c4c4c4"/><circle cx="20" cy="21.6" r=".6" fill="#c4c4c4"/><circle cx="22" cy="18.6" r=".6" fill="#c4c4c4"/><circle cx="22" cy="20.6" r=".6" fill="#c4c4c4"/><circle cx="24" cy="19.6" r=".6" fill="#c4c4c4"/></svg><svg style="position:absolute;left:1475px;top:75px;" width="32" height="32" viewBox="0 0 32 32" fill="none"><path d="M1.700 .2h25.600a1.500 1.500 0 0 1 1.500 1.500v3a1.500 1.500 0 0 1-1.500 1.500H18v20.600a1.500 1.500 0 0 1-1.500 1.500h-3.600a1.500 1.500 0 0 1-1.500-1.500V6.200H1.700A1.500 1.500 0 0 1 .2 4.700v-3A1.500 1.500 0 0 1 1.700 .2z" transform="translate(1.900 2.300)" fill="#fafafa" stroke="#2f383a" stroke-width="1.3" stroke-linecap="round" stroke-linejoin="round"/><path d="M1.700 .2h25.600a1.500 1.500 0 0 1 1.500 1.500v3a1.500 1.500 0 0 1-1.500 1.500H18v20.600a1.500 1.500 0 0 1-1.500 1.500h-3.600a1.500 1.500 0 0 1-1.500-1.500V6.200H1.700A1.500 1.500 0 0 1 .2 4.700v-3A1.500 1.500 0 0 1 1.700 .2z" fill="#fafafa" stroke="#2f383a" stroke-width="1.4" stroke-linecap="round" stroke-linejoin="round"/></svg><svg style="position:absolute;left:1519px;top:75px;" width="32" height="32" viewBox="0 0 32 32" fill="none"><path d="M.3 2.900L11 .3h13.600v2.600l6.100 1v1.200l-6.100 1.200H.3z M.3 16.700h24.300l6.100 1.300v1.200l-6.100 1v2.200H11L.3 18.400z M14.300 6.300v10.400 M22.700 6.300v10.400 M14.300 22.400v8.200 M22.700 22.400v8.200 M20.300 30.600h2.400" stroke="#c4c4c4" stroke-width="1.05" stroke-linecap="round" stroke-linejoin="round"/><path d="M14.300 8.2h3.2 M14.300 10h2 M14.300 11.8h3.2 M14.300 13.6h2 M14.300 15.4h3.2 M14.300 24.4h3.2 M14.300 26.2h2 M14.300 28h3.2 M14.300 29.8h2 " stroke="#c4c4c4" stroke-width="1.05" stroke-linecap="round" stroke-linejoin="round"/><circle cx="5.100" cy="11.500" r="3.900" stroke="#c4c4c4" stroke-width="1.05" stroke-linecap="round" stroke-linejoin="round"/></svg><svg style="position:absolute;left:1563px;top:75px;" width="32" height="32" viewBox="0 0 32 32" fill="none"><rect x=".4" y="21.700" width="30.300" height="8.800" rx=".9" stroke="#c4c4c4" stroke-width="1.05" stroke-linecap="round" stroke-linejoin="round"/><rect x="9.200" y="14.200" width="16.700" height="7.200" stroke="#c4c4c4" stroke-width="1.05" stroke-linecap="round" stroke-linejoin="round" stroke-dasharray=".9 1.100" stroke-linecap="butt"/><path d="M12 .3l14 7-2.800 5.200-14-7z M8.700 9.500c-3.500 2.200-5.800 5-7 8.900 M.4 13.700l1.300 4.700 5.600-1.700" stroke="#c4c4c4" stroke-width="1.05" stroke-linecap="round" stroke-linejoin="round"/></svg><svg style="position:absolute;left:1607px;top:75px;" width="32" height="32" viewBox="0 0 32 32" fill="none"><defs><clipPath id="wc1"><circle cx="5.5" cy="5.8" r="5.400"/></clipPath></defs><g clip-path="url(#wc1)"><path d="M-6.5 11.8l12-12" stroke="#c4c4c4" stroke-width="0.9" stroke-linecap="round" stroke-linejoin="round"/><path d="M-3.2 11.8l12-12" stroke="#c4c4c4" stroke-width="0.9" stroke-linecap="round" stroke-linejoin="round"/><path d="M0.1 11.8l12-12" stroke="#c4c4c4" stroke-width="0.9" stroke-linecap="round" stroke-linejoin="round"/><path d="M3.4 11.8l12-12" stroke="#c4c4c4" stroke-width="0.9" stroke-linecap="round" stroke-linejoin="round"/><path d="M6.7 11.8l12-12" stroke="#c4c4c4" stroke-width="0.9" stroke-linecap="round" stroke-linejoin="round"/><path d="M10 11.8l12-12" stroke="#c4c4c4" stroke-width="0.9" stroke-linecap="round" stroke-linejoin="round"/><path d="M13.3 11.8l12-12" stroke="#c4c4c4" stroke-width="0.9" stroke-linecap="round" stroke-linejoin="round"/><path d="M16.6 11.8l12-12" stroke="#c4c4c4" stroke-width="0.9" stroke-linecap="round" stroke-linejoin="round"/></g><circle cx="5.5" cy="5.8" r="5.400" stroke="#c4c4c4" stroke-width="1.05" stroke-linecap="round" stroke-linejoin="round"/><defs><clipPath id="wc2"><circle cx="25.2" cy="5.8" r="5.400"/></clipPath></defs><g clip-path="url(#wc2)"><path d="M13.2 11.8l12-12" stroke="#c4c4c4" stroke-width="0.9" stroke-linecap="round" stroke-linejoin="round"/><path d="M16.5 11.8l12-12" stroke="#c4c4c4" stroke-width="0.9" stroke-linecap="round" stroke-linejoin="round"/><path d="M19.8 11.8l12-12" stroke="#c4c4c4" stroke-width="0.9" stroke-linecap="round" stroke-linejoin="round"/><path d="M23.1 11.8l12-12" stroke="#c4c4c4" stroke-width="0.9" stroke-linecap="round" stroke-linejoin="round"/><path d="M26.4 11.8l12-12" stroke="#c4c4c4" stroke-width="0.9" stroke-linecap="round" stroke-linejoin="round"/><path d="M29.7 11.8l12-12" stroke="#c4c4c4" stroke-width="0.9" stroke-linecap="round" stroke-linejoin="round"/><path d="M33 11.8l12-12" stroke="#c4c4c4" stroke-width="0.9" stroke-linecap="round" stroke-linejoin="round"/><path d="M36.3 11.8l12-12" stroke="#c4c4c4" stroke-width="0.9" stroke-linecap="round" stroke-linejoin="round"/></g><circle cx="25.2" cy="5.8" r="5.400" stroke="#c4c4c4" stroke-width="1.05" stroke-linecap="round" stroke-linejoin="round"/><defs><clipPath id="wc3"><circle cx="5.5" cy="25" r="5.400"/></clipPath></defs><g clip-path="url(#wc3)"><path d="M-6.5 31l12-12" stroke="#c4c4c4" stroke-width="0.9" stroke-linecap="round" stroke-linejoin="round"/><path d="M-3.2 31l12-12" stroke="#c4c4c4" stroke-width="0.9" stroke-linecap="round" stroke-linejoin="round"/><path d="M0.1 31l12-12" stroke="#c4c4c4" stroke-width="0.9" stroke-linecap="round" stroke-linejoin="round"/><path d="M3.4 31l12-12" stroke="#c4c4c4" stroke-width="0.9" stroke-linecap="round" stroke-linejoin="round"/><path d="M6.7 31l12-12" stroke="#c4c4c4" stroke-width="0.9" stroke-linecap="round" stroke-linejoin="round"/><path d="M10 31l12-12" stroke="#c4c4c4" stroke-width="0.9" stroke-linecap="round" stroke-linejoin="round"/><path d="M13.3 31l12-12" stroke="#c4c4c4" stroke-width="0.9" stroke-linecap="round" stroke-linejoin="round"/><path d="M16.6 31l12-12" stroke="#c4c4c4" stroke-width="0.9" stroke-linecap="round" stroke-linejoin="round"/></g><circle cx="5.5" cy="25" r="5.400" stroke="#c4c4c4" stroke-width="1.05" stroke-linecap="round" stroke-linejoin="round"/><defs><clipPath id="wc4"><circle cx="25.2" cy="25" r="5.400"/></clipPath></defs><g clip-path="url(#wc4)"><path d="M13.2 31l12-12" stroke="#c4c4c4" stroke-width="0.9" stroke-linecap="round" stroke-linejoin="round"/><path d="M16.5 31l12-12" stroke="#c4c4c4" stroke-width="0.9" stroke-linecap="round" stroke-linejoin="round"/><path d="M19.8 31l12-12" stroke="#c4c4c4" stroke-width="0.9" stroke-linecap="round" stroke-linejoin="round"/><path d="M23.1 31l12-12" stroke="#c4c4c4" stroke-width="0.9" stroke-linecap="round" stroke-linejoin="round"/><path d="M26.4 31l12-12" stroke="#c4c4c4" stroke-width="0.9" stroke-linecap="round" stroke-linejoin="round"/><path d="M29.7 31l12-12" stroke="#c4c4c4" stroke-width="0.9" stroke-linecap="round" stroke-linejoin="round"/><path d="M33 31l12-12" stroke="#c4c4c4" stroke-width="0.9" stroke-linecap="round" stroke-linejoin="round"/><path d="M36.3 31l12-12" stroke="#c4c4c4" stroke-width="0.9" stroke-linecap="round" stroke-linejoin="round"/></g><circle cx="25.2" cy="25" r="5.400" stroke="#c4c4c4" stroke-width="1.05" stroke-linecap="round" stroke-linejoin="round"/><rect x="5.500" y="5.500" width="20.200" height="20" rx="1.200" fill="#fafafa" stroke="#c4c4c4" stroke-width="1.05" stroke-linecap="round" stroke-linejoin="round"/></svg><svg style="position:absolute;left:1679px;top:75px;" width="32" height="32" viewBox="0 0 32 32" fill="none"><rect x=".7" y="1.700" width="29.600" height="29.500" rx="1.700" stroke="#2f383a" stroke-width="1.35" stroke-linecap="round" stroke-linejoin="round"/><path d="M15.400 1.700V7.400h.6a2.550 2.550 0 1 1 0 2.900h-.6V16.300 M.7 16.300H6.500v-.6a2.550 2.550 0 1 1 2.900 0v.6H15.400 M15.400 16.300H21.500v.6a2.550 2.550 0 1 0 2.900 0v-.6H30.300 M15.400 16.300V22.300h-.6a2.550 2.550 0 1 0 0 2.900h.6V31.200" stroke="#2f383a" stroke-width="1.35" stroke-linecap="round" stroke-linejoin="round"/></svg>
<div class="" style="position:absolute;left:1016px;top:75px;width:1px;height:31px;background:#7a7a7a"></div>
<div class="" style="position:absolute;left:1660px;top:75px;width:1px;height:31px;background:#7a7a7a"></div>
<svg style="position:absolute;left:0;top:0" width="1920" height="1080" viewBox="0 0 1920 1080"><path d="M455.300 931.700L519.200 929.200L525 970.800L455.300 973.300Z" fill="#cbcbcb"/><path d="M455.300 973.300L525 970.800L525 1019.700L460.800 1024.200Z" fill="#c6c6c6"/><path d="M471.500 930.900l1.500 42 M503.500 929.800l4 41.500 M455.300 941.500l65.300-2.500 M455.300 962l68.500-2.600" stroke="#d2d2d2" stroke-width=".8" fill="none"/><path d="M455.800 981.700L460.300 1022.500" stroke="#5ccb1e" stroke-width="2.400"/><path d="M461 975.800V1023" stroke="#2a7cf0" stroke-width="2.400"/><path d="M461.700 1023.400L524.700 1019.800" stroke="#f03a5c" stroke-width="2.600"/></svg>
<span id="t72" class="t" style="left:468.41px;top:948px;font-size:9.5px;color:#4a4a4a;transform-origin:0 50%;transform:skewY(-2deg) scaleX(1.38)">Сверху</span>
<span id="t73" class="t" style="left:465.7px;top:994px;font-size:10px;color:#4a4a4a;transform-origin:0 50%;transform:skewY(-2.500deg) scaleX(1.3)">Спереди</span>
<span id="t74" class="t" style="left:456.14px;top:959px;font-size:12px;color:#2a7cf0;letter-spacing:0.096px;">Z</span>
<span id="t75" class="t" style="left:449.64px;top:966px;font-size:12px;color:#5ccb1e;letter-spacing:0.324px;">Y</span>
<span id="t76" class="t" style="left:531.61px;top:1012px;font-size:13px;color:#f03a5c;letter-spacing:0.238px;">X</span>
<!-- plate -->
<svg style="position:absolute;left:0;top:0" width="1920" height="1080" viewBox="0 0 1920 1080"><path d="M1429.04 319.10 L1431.00 319.11 L1432.96 319.35 L1434.83 319.80 L1436.54 320.46 L1438.03 321.28 L1439.23 322.25 L1440.11 323.32 L1440.63 324.46 L1540.65 674.41 L1540.88 676.04 L1540.66 677.63 L1539.98 679.14 L1538.87 680.49 L1537.38 681.64 L1535.56 682.54 L1533.48 683.16 L1531.23 683.46 L929.22 722.20 L926.84 722.19 L924.54 721.85 L922.42 721.19 L920.56 720.23 L919.03 719.03 L917.89 717.61 L917.19 716.05 L916.94 714.39 L914.39 351.02 L914.57 349.83 L915.15 348.67 L916.08 347.58 L917.35 346.60 L918.89 345.77 L920.65 345.13 L922.56 344.69 L924.54 344.48 Z" fill="#434545"/><path d="M931.50 354.20L937.10 705.40 M954.26 353.05L964.02 703.78 M976.98 351.90L990.89 702.17 M999.69 350.75L1017.73 700.56 M1022.36 349.60L1044.53 698.95 M1045.00 348.46L1071.29 697.35 M1067.62 347.32L1098.01 695.74 M1090.21 346.17L1124.70 694.14 M1112.77 345.03L1151.34 692.54 M1135.31 343.89L1177.95 690.95 M1157.82 342.75L1204.52 689.35 M1180.30 341.62L1231.05 687.76 M1202.75 340.48L1257.54 686.17 M1225.18 339.35L1284.00 684.58 M1247.58 338.21L1310.41 683.00 M1269.95 337.08L1336.79 681.42 M1292.30 335.95L1363.14 679.84 M1314.61 334.82L1389.44 678.26 M1336.90 333.70L1415.71 676.68 M1359.17 332.57L1441.94 675.11 M1381.41 331.45L1468.13 673.54 M1403.62 330.32L1494.28 671.97 M1425.80 329.20L1520.40 670.40" stroke="#878b88" stroke-width="1.600" fill="none"/><path d="M931.50 354.20L1425.80 329.20 M931.72 367.79L1429.47 342.43 M931.94 381.57L1433.19 355.85 M932.16 395.55L1436.96 369.46 M932.39 409.74L1440.79 383.26 M932.61 424.13L1444.67 397.27 M932.85 438.73L1448.61 411.47 M933.08 453.54L1452.61 425.88 M933.32 468.58L1456.66 440.51 M933.57 483.85L1460.78 455.35 M933.81 499.34L1464.95 470.41 M934.07 515.07L1469.19 485.70 M934.32 531.05L1473.49 501.22 M934.58 547.27L1477.86 516.97 M934.84 563.74L1482.30 532.97 M935.11 580.47L1486.80 549.22 M935.38 597.47L1491.38 565.72 M935.65 614.74L1496.02 582.48 M935.93 632.29L1500.74 599.51 M936.22 650.12L1505.54 616.80 M936.51 668.25L1510.41 634.38 M936.80 686.67L1515.37 652.24 M937.10 705.40L1520.40 670.40" stroke="#878b88" stroke-width="1.150" fill="none"/></svg>
<div style="position:absolute;left:0;top:0;width:880px;height:880px;transform-origin:0 0;transform:matrix3d(0.5834695496,-0.02338381431,0,1.52651172e-05,-0.1584368673,0.275037686,0,-0.0001758622385,0,0,1,0,931.5,354.2,0,1)"><svg width="880" height="880" viewBox="0 0 880 880" style="position:absolute;left:0;top:0;overflow:visible"><g transform="scale(4)" font-family='"Liberation Sans","Noto Sans CJK SC",sans-serif'><text x="3.6" y="0.8" font-size="9.2" fill="#fff" textLength="80" lengthAdjust="spacingAndGlyphs" transform="rotate(90 3.6 0.8)" style="stroke:#fff;stroke-width:.18">Smooth PEI Plate</text><path d="M2.6 103.8L17 112.2L2.6 120.6Z M2.4 124.2L18.6 133.7L2.400 143.200Z" fill="none" stroke="#fff" stroke-width="1" stroke-linejoin="round"/><circle cx="6.800" cy="112.200" r="2.700" fill="none" stroke="#fff" stroke-width=".5"/><path d="M5 110.500l3.600 3.400 M5 113.900l3.600-3.400 M6.800 109.500v5.400" stroke="#fff" stroke-width=".5"/><path d="M5 128.500v10.500 M7.500 130c1.300 1 -1.300 2 0 3s-1.300 2 0 3 M10 130.800c1.200.9-1.200 1.800 0 2.700s-1.200 1.800 0 2.700 M12.500 131.600c1 .8-1 1.600 0 2.400s-1 1.600 0 2.400" fill="none" stroke="#fff" stroke-width=".55" stroke-linecap="round"/><text x="7.2" y="145.6" font-size="5.8" fill="#fff" textLength="52.6" lengthAdjust="spacingAndGlyphs" transform="rotate(90 7.2 145.6)" style="stroke:#fff;stroke-width:.15">注意：高温时请勿触摸</text><text x="1.9" y="146.4" font-size="3.8" fill="#fff" textLength="50" lengthAdjust="spacingAndGlyphs" transform="rotate(90 1.9 146.4)" style="stroke:#fff;stroke-width:.08">Warning:hot surface, wait until cool</text><text x="16.8" y="217.1" font-size="6.7" fill="#fff" textLength="56" lengthAdjust="spacingAndGlyphs" font-weight="700">PLA/PETG/ABS/TPU</text><rect x="82" y="211.1" width="7.2" height="6.7" fill="#fff"/><path d="M83.6 214.785h4 M85.96 212.3v4.3" stroke="#434545" stroke-width="1.3"/><rect x="83.56" y="212.485" width="1.6" height="1.6" fill="#434545"/><path d="M146 208.600l5.200 5.800-5.200 5.800-5.200-5.800z" fill="#fff"/><path d="M144.700 211.600h4l-.9 1.500h-2.300l-.7 1.200h2.200l-.9 1.500h-2.200l-1.500 2.600-1.300-1.200z" fill="#434545"/><text x="152.4" y="217.4" font-size="7.3" fill="#fff" textLength="52.8" lengthAdjust="spacingAndGlyphs" font-weight="700" style="font-style:italic;stroke:#fff;stroke-width:.2">FLASHFORGE</text><rect x="213.2" y="211.5" width="7.3" height="6.6" fill="#fff"/><path d="M214.8 215.13h4.1 M217.215 212.7v4.2" stroke="#434545" stroke-width="1.3"/><rect x="214.815" y="212.83" width="1.6" height="1.6" fill="#434545"/><path d="M0 220H22" stroke="#f03a5c" stroke-width=".9"/><path d="M.15 220V197.500" stroke="#5ccb1e" stroke-width=".6"/><text x="0.6" y="-4.6" font-size="6.6" fill="#f0703f" textLength="47.5" lengthAdjust="spacingAndGlyphs" font-weight="700">Без названия</text><g transform="translate(50.500 -10)"><rect x="0" y="0" width="7" height="5.800" rx=".5" fill="#dcdcdc" fill-opacity=".85"/><path d="M1.400 4.600l3.300-3.600 1.300 1-3.300 3.600z" fill="#b8b8b8"/></g><text x="224.2" y="213.2" font-size="11" fill="#f0703f" textLength="11.8" lengthAdjust="spacingAndGlyphs" font-weight="700">01</text><g transform="translate(224.4 4.8)"><rect x="-.5" y=".4" width="16" height="15.300" rx="1.200" fill="#3a3c3c" fill-opacity=".35"/><rect x="0" y="0" width="15.500" height="15.300" rx="1" fill="#ededed" stroke="#b6b6b6" stroke-width=".85"/><g fill="none" stroke="#a4a4a4" stroke-width=".9" stroke-linecap="round" stroke-linejoin="round"><path d="M3.400 3.400l8.700 8.500 M12.100 3.400l-8.700 8.500"/></g></g><g transform="translate(224.4 27.8)"><rect x="-.5" y=".4" width="16" height="15.300" rx="1.200" fill="#3a3c3c" fill-opacity=".35"/><rect x="0" y="0" width="15.500" height="15.300" rx="1" fill="#ededed" stroke="#b6b6b6" stroke-width=".85"/><g fill="none" stroke="#a4a4a4" stroke-width=".9" stroke-linecap="round" stroke-linejoin="round"><path d="M8.300 1.800l5.200 5-5.200 5-5.200-5z M2 13.400h12 M4 9.900l-2.200 2.200 M1.700 10.400v1.800h1.800"/><path d="M6.900 8.300v-2.200a1.400 1.400 0 0 1 2.800 0v2.200 M6.900 7.100h2.800" stroke-width=".7"/></g></g><g transform="translate(224.4 50.4)"><rect x="-.5" y=".4" width="16" height="15.300" rx="1.200" fill="#3a3c3c" fill-opacity=".35"/><rect x="0" y="0" width="15.500" height="15.300" rx="1" fill="#ededed" stroke="#b6b6b6" stroke-width=".85"/><g fill="none" stroke="#a4a4a4" stroke-width=".9" stroke-linecap="round" stroke-linejoin="round"><rect x="2.300" y="2.300" width="5.800" height="2.600" rx="1.300"/><circle cx="3.700" cy="7.400" r="1.300"/><circle cx="7" cy="7.400" r="1.300"/><rect x="9.600" y="2.300" width="3.800" height="6.400" rx=".5"/><rect x="2.300" y="10" width="11.100" height="3.200" rx=".5"/></g></g><g transform="translate(224.4 73.6)"><rect x="-.5" y=".4" width="16" height="15.300" rx="1.200" fill="#3a3c3c" fill-opacity=".35"/><rect x="0" y="0" width="15.500" height="15.300" rx="1" fill="#ededed" stroke="#b6b6b6" stroke-width=".85"/><g fill="none" stroke="#a4a4a4" stroke-width=".9" stroke-linecap="round" stroke-linejoin="round"><rect x="3.300" y="7.300" width="9" height="5.800" rx=".9"/><path d="M4.300 7.300v-1.300a3.800 3.800 0 0 1 7.400-1.200"/></g></g><g transform="translate(224.4 96.5)"><rect x="-.5" y=".4" width="16" height="15.300" rx="1.200" fill="#3a3c3c" fill-opacity=".35"/><rect x="0" y="0" width="15.500" height="15.300" rx="1" fill="#ededed" stroke="#b6b6b6" stroke-width=".85"/><g fill="none" stroke="#a4a4a4" stroke-width=".9" stroke-linecap="round" stroke-linejoin="round"><path d="M2 5.200h1.600 M6.400 5.200h7.300 M2 10.600h7.300 M12.100 10.600h1.600"/><rect x="3.600" y="3" width="2.800" height="4.400" rx="1.200"/><rect x="9.300" y="8.400" width="2.800" height="4.400" rx="1.200"/></g></g><g transform="translate(224.4 119.5)"><rect x="-.5" y=".4" width="16" height="15.300" rx="1.200" fill="#3a3c3c" fill-opacity=".35"/><rect x="0" y="0" width="15.500" height="15.300" rx="1" fill="#ededed" stroke="#b6b6b6" stroke-width=".85"/><g fill="none" stroke="#a4a4a4" stroke-width=".9" stroke-linecap="round" stroke-linejoin="round"><path d="M2.800 3h10 M7.800 13.200V3.600 M4 8.600l3.800-4.800 3.800 4.800"/></g></g></g></svg></div>
<svg style="position:absolute;left:0;top:0" width="1920" height="1080" viewBox="0 0 1920 1080"><path d="M1080 722.5 L1081 710.5 L1387 692 L1391 704 L1402 704.6 L1404.6 708 L1404.6 719 L1068 739.5 L1066.3 727 L1068.5 723.6 Z" fill="#424545" stroke="#424545" stroke-width="1" stroke-linejoin="round"/><path d="M1088 718.3 L1383 700.4 L1404.6 708 L1404.6 719 L1068 739.5 L1066.3 727 L1068.5 723.6 Z" fill="#3f4242" stroke="#3f4242" stroke-width="1" stroke-linejoin="round"/><path d="M1067 739 L1404.6 718.6 L1405 730 L1401 734.6 L1075 754.2 L1067.3 750 Z" fill="#2a2c2c" stroke="#2a2c2c" stroke-width="1.6" stroke-linejoin="round"/><path d="M1068 739.2L1404 718.800" stroke="#3a3d3d" stroke-width="1"/><path d="M1069.500 724l7.500-.5a3.600 3.600 0 0 0-.4-7.200l-9 .5z" fill="#e8e8e8"/><path d="M1399 703.700l-7.500 .5a3.600 3.600 0 0 1-.4-7.200l9-.5z" fill="#e8e8e8"/><defs><linearGradient id="cg" x1="0" x2="1"><stop offset="0" stop-color="#0b5ec6"/><stop offset=".5" stop-color="#0855b2"/><stop offset="1" stop-color="#06438f"/></linearGradient><linearGradient id="rg" x1="0" x2="1"><stop offset="0" stop-color="#b3b5b4"/><stop offset=".45" stop-color="#a0a2a1"/><stop offset="1" stop-color="#848685"/></linearGradient></defs><path d="M1015 509.5 L1390 488.5 L1390 492.8 L1015 513.6 Z" fill="#9c9e9d" /><path d="M1015 503.5 L1390 482.5 L1390 488.5 L1015 509.5 Z" fill="#d7d9d8" /><path d="M971.2 504.6 v6.600 a24.2 14.6 0 0 0 48.4 0 v-6.600 z" fill="url(#rg)"/><ellipse cx="995.4" cy="504.6" rx="24.2" ry="14.6" fill="#d7d9d8"/><path d="M1385.4 482.9 v6.600 a24.2 15.2 0 0 0 48.4 0 v-6.600 z" fill="url(#rg)"/><ellipse cx="1409.6" cy="482.9" rx="24.2" ry="15.2" fill="#d7d9d8"/><path d="M1010 499.300l9-.5v2.400l-9 .5z M1385 479.300l10.500-.6v2.500l-10.500 .6z" fill="#0a55b0"/><path d="M976.9 504.3 L987.3 475 A5.4 4 0 0 1 998.1 475 L1012.3 504.3 A17.7 10.6 0 0 1 976.9 504.3 Z" fill="url(#cg)"/><ellipse cx="992.7" cy="475" rx="5.4" ry="4" fill="#0a66d8"/><path d="M993.78 471.4 l4.05 2.4 l-3.24 4.8 z" fill="#064a9c"/><path d="M1409 449.500L1391.500 479.500L1398 486L1413 455Z" fill="#074c9e"/><path d="M1394.7 483.3 L1410.4 453 A4.8 3.9 0 0 1 1420 453 L1427.9 483.3 A16.6 9.5 0 0 1 1394.7 483.3 Z" fill="url(#cg)"/><ellipse cx="1415.2" cy="453" rx="4.8" ry="3.9" fill="#0a66d8"/><path d="M1414.24 449.49 l-3.6 2.34 l2.88 4.68 z" fill="#064a9c"/><path d="M1306 306 L1407.6 300.9 L1410.8 314 L1309.4 318.9 Z" fill="#4a90d9" /><path d="M1306 306 L1309 318.9 L1309 332.5 L1306 332.7 Z" fill="#3a7bd0" /><path d="M1305.7 332.7 L1309 332.5 L1308.6 353 L1305.6 342 Z" fill="#1c4c8a" /><path d="M1309.4 318.9 L1410.8 314 L1413.2 321 L1310.6 325.8 Z" fill="#d9dbda" /><path d="M1310.6 325.8 L1413.2 321 L1414.3 327.8 L1311 332.8 Z" fill="#a2a4a3" /><path d="M1308.6 332.9 L1414.5 327.5 L1412.8 356 L1310 367.8 Z" fill="#8e8e8e" fill-opacity=".56"/><path d="M937.100 705.400L932.500 661.700" stroke="#2a7cf0" stroke-width="1.600"/></svg>
<!-- taskbar -->
<div class="" style="position:absolute;left:0px;top:1040px;width:1920px;height:40px;background:linear-gradient(90deg,#2b2123 0,#2a2022 280px,#221d1f 420px,#1d1c1e 540px,#201c1e 640px,#2e1c1e 760px,#351e20 960px,#301e1f 1100px,#2a1e1f 1260px,#1f1b1c 1450px,#1e1a1b 1700px,#251e1f 1800px,#2c2224 1900px)"></div>
<div class="" style="position:absolute;left:149px;top:1040px;width:48px;height:40px;background:#51474a"></div>
<svg style="position:absolute;left:15.6px;top:1051.7px;" width="17" height="17" viewBox="0 0 17 17" fill="none"><path d="M0 2.400l6.900-.95v6.500H0z M7.800 1.300L16.800 0v7.950H7.800z M0 8.950h6.900v6.500L0 14.500z M7.800 8.950h9v7.950l-9-1.250z" fill="#fff"/></svg>
<svg style="position:absolute;left:63.5px;top:1050px;" width="23" height="19" viewBox="0 0 23 19" fill="none"><path d="M1 1.500a1 1 0 0 1 1-1h6.500l2 2.300H1z" fill="#f0a71f"/><rect x="1" y="2.500" width="21" height="15.500" rx="1" fill="#ffd55c"/><path d="M4 18v-6.200a1 1 0 0 1 1-1h13a1 1 0 0 1 1 1V18h-3.500v-4h-8v4z" fill="#3f9ae6"/></svg>
<svg style="position:absolute;left:111.5px;top:1047.5px;" width="25" height="25" viewBox="0 0 25 25" fill="none"><defs><linearGradient id="yg" x1="0" y1="0" x2="0" y2="1"><stop offset="0" stop-color="#ff7a1a"/><stop offset="1" stop-color="#ff2d2d"/></linearGradient></defs><circle cx="12.300" cy="12.300" r="12.100" fill="#fff"/><path d="M6.400 6.900l5.900 6.300v7.300" stroke="url(#yg)" stroke-width="3" fill="none" stroke-linecap="butt" stroke-linejoin="round"/><path d="M12.300 13.200l6-6.300" stroke="#ff4fd0" stroke-width="3" stroke-linecap="butt"/><path d="M12.300 13.800l2.500-2.600" stroke="#ff3a6a" stroke-width="3"/></svg>
<svg style="position:absolute;left:160.5px;top:1047.5px;" width="25" height="25" viewBox="0 0 25 25" fill="none"><circle cx="12.500" cy="12.300" r="11.900" fill="#f4f4f4"/><path d="M5.800 4.200c2-1.200 5-1.700 7.800-1.200 4.200 .8 6.600 4 6.600 8 0 5.600-4.200 9.600-9.500 10.600-1.600-1.600-2.600-3.500-2.900-5.800-.4-3.200 .4-5.900 2-8.400-1.300-1.500-2.600-2.500-4-3.200z" fill="#1d1d1f"/><ellipse cx="15.300" cy="6.500" rx="1.900" ry="1" fill="#f4f4f4" transform="rotate(-28 15.300 6.500)"/><path d="M18.700 9.200L8.200 19.700l-1.200-1.600L17.500 8z" fill="#1fa597"/><path d="M18.900 10.400c.7 4.300-2.400 8.700-7.600 10.700 3.700-2.700 6.200-6.300 7.600-10.700z" fill="#f4f4f4"/></svg>
<svg style="position:absolute;left:210px;top:1051px;" width="24" height="18" viewBox="0 0 24 18" fill="none"><rect x="0" y="0" width="24" height="17.500" rx="4.500" fill="#f00"/><path d="M9.300 4.600v8.300l7.200-4.150z" fill="#fff"/></svg>
<svg style="position:absolute;left:258.5px;top:1047px;" width="25" height="25" viewBox="0 0 25 25" fill="none"><circle cx="12.500" cy="12.500" r="12.300" fill="#5dba83"/><path d="M3.500 20.500c.5-4 3-5.500 6-6h6c3 .5 5.500 2 6 6-2.300 2.600-5.400 4.200-9 4.200s-6.700-1.600-9-4.200z" fill="#1f2a2a"/><path d="M7.500 8.200l2-.6.500-2.400 2.500.6 2.500-.6.500 2.400 2.600.7-.3.900-10 .1z" fill="#1f2a2a"/></svg>
<div class="" style="position:absolute;left:55px;top:1078px;width:40px;height:2px;background:#76b9ed"></div>
<div class="" style="position:absolute;left:104px;top:1078px;width:40px;height:2px;background:#76b9ed"></div>
<div class="" style="position:absolute;left:149px;top:1078px;width:48px;height:2px;background:#76b9ed"></div>
<div class="" style="position:absolute;left:202px;top:1078px;width:40px;height:2px;background:#76b9ed"></div>
<div class="" style="position:absolute;left:251px;top:1078px;width:40px;height:2px;background:#76b9ed"></div>
<svg style="position:absolute;left:1651px;top:1055px;" width="13" height="8" viewBox="0 0 13 8" fill="none"><path d="M.7 7l5.800-6 5.800 6" stroke="#fff" stroke-width="1.200" fill="none"/></svg>
<svg style="position:absolute;left:1675px;top:1051.5px;" width="13" height="17" viewBox="0 0 13 17" fill="none"><rect x=".8" y="5" width="7.400" height="7" rx="1" stroke="#fff" stroke-width="1" fill="none" stroke-linecap="round" stroke-linejoin="round"/><path d="M8.200 7.500l3.300-1.700v5.400l-3.300-1.700 M2.500 2.500a6 6 0 0 1 7 0 M2.500 14.500a6 6 0 0 0 7 0" stroke="#fff" stroke-width="1" fill="none" stroke-linecap="round" stroke-linejoin="round"/></svg>
<svg style="position:absolute;left:1696.5px;top:1051.5px;" width="18" height="17" viewBox="0 0 18 17" fill="none"><path d="M1 2.300l14.500-1.800v10.500L1 13z" stroke="#fff" stroke-width="1" fill="none" stroke-linecap="round" stroke-linejoin="round"/><path d="M5 5.500h4.500v3.500 M11 8.500h-4.500v-2" stroke="#fff" stroke-width="1" fill="none" stroke-linecap="round" stroke-linejoin="round" stroke-width=".9"/><circle cx="12.500" cy="12.500" r="3.700" fill="#f90"/></svg>
<svg style="position:absolute;left:1720.5px;top:1054px;" width="17" height="14" viewBox="0 0 17 14" fill="none"><path d="M3.300 1h12.200v8.800H3.300z M9.400 9.800v2.500 M6 12.500h7 M3.300 3.800H.800V1h2.500 M2 3.800v5" stroke="#fff" stroke-width="1" fill="none" stroke-linecap="round" stroke-linejoin="round"/></svg>
<svg style="position:absolute;left:1744.5px;top:1053px;" width="17" height="14" viewBox="0 0 17 14" fill="none"><path d="M.8 4.800h2.500l3.500-3.500v11.400L3.300 9.200H.8z M8.800 5a3 3 0 0 1 0 4 M10.800 3.200a5.500 5.500 0 0 1 0 7.600" stroke="#fff" stroke-width="1" fill="none" stroke-linecap="round" stroke-linejoin="round"/><path d="M12.800 1.500a8 8 0 0 1 0 11" stroke="#fff" stroke-width="1" fill="none"/><path d="M14.900 .5a10 10 0 0 1 0 13" stroke="#6a6466" stroke-width=".9" fill="none"/></svg>
<span id="t77" class="t" style="left:1771.65px;top:1055px;font-size:11.5px;color:#fff;letter-spacing:0.137px;">РУС</span>
<span id="t78" class="t" style="left:1819.15px;top:1046px;font-size:11.5px;color:#fff;letter-spacing:-0.119px;">22:13</span>
<span id="t79" class="t" style="left:1807.15px;top:1064px;font-size:11.5px;color:#fff;letter-spacing:-0.266px;">19.11.2025</span>
<svg style="position:absolute;left:1878.5px;top:1051.5px;" width="18" height="18" viewBox="0 0 18 18" fill="none"><path d="M.5 .8h15.500v12.400h-7.500l-3 3v-3H.5z" fill="#fff"/><path d="M3.300 4h10 M3.300 6.500h10 M3.300 9h6.500" stroke="#2a2224" stroke-width="1"/><circle cx="13.800" cy="12.300" r="3" fill="#fff" stroke="#2a2224" stroke-width=".8"/><path d="M12.300 13.500l3-2.500" stroke="#2a2224" stroke-width=".9"/></svg>
<div class="" style="position:absolute;left:1915px;top:1040px;width:1px;height:40px;background:#5a5053"></div>
</body></html>
